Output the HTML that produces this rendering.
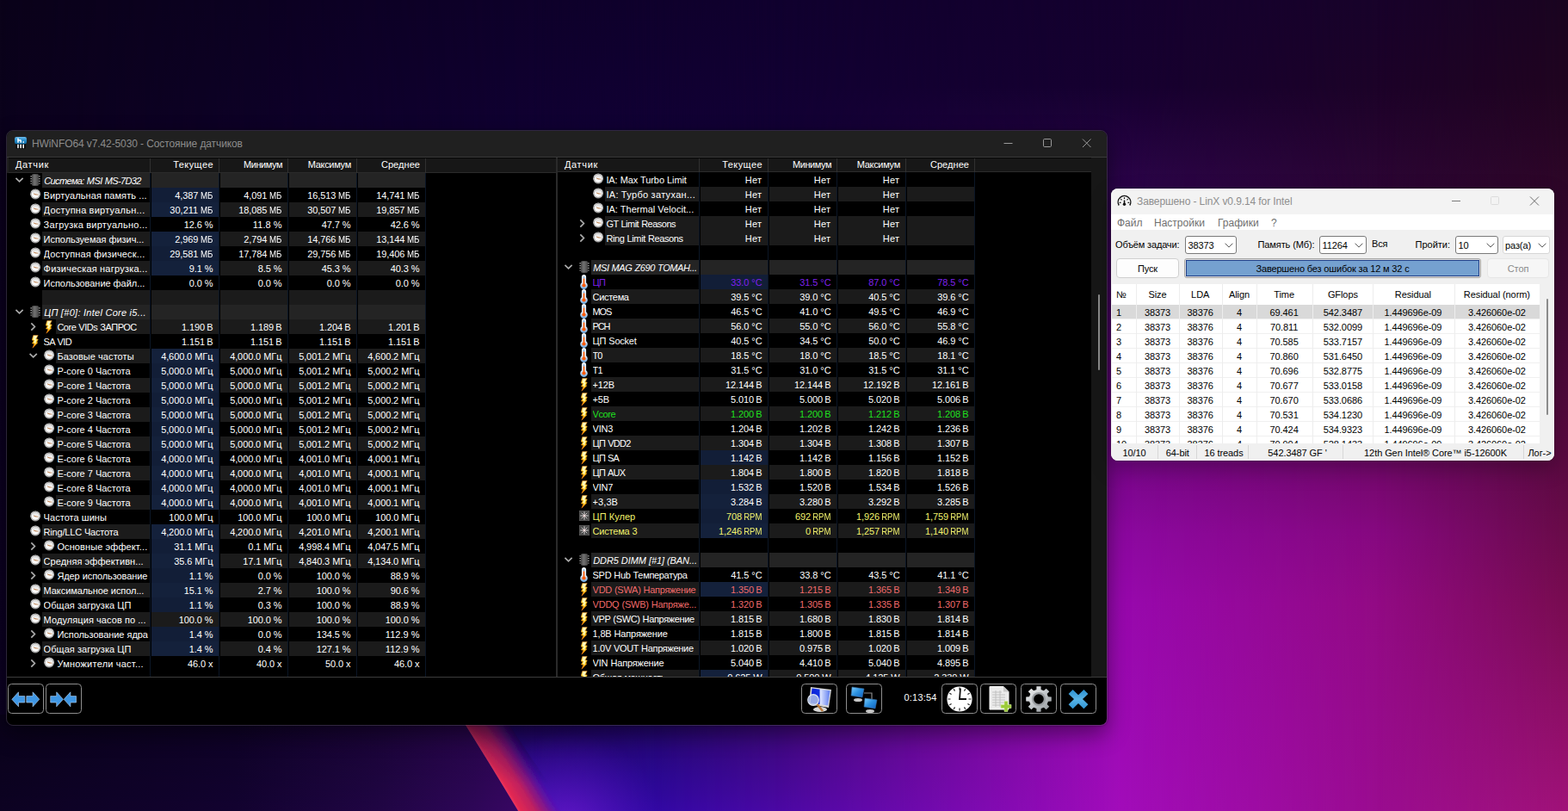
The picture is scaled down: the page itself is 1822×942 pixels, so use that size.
<!DOCTYPE html>
<html lang="ru"><head><meta charset="utf-8"><title>HWiNFO64 / LinX</title>
<style>
html,body{margin:0;padding:0;background:#0d0420;}
body{width:1822px;height:942px;overflow:hidden;position:relative;font-family:"Liberation Sans",sans-serif;font-size:11px;color:#fff;}
#page{position:absolute;left:0;top:0;width:1822px;height:942px;overflow:hidden;}
#page div,#page svg.a,.a{position:absolute;}
.win{left:0;top:0;width:1822px;height:942px;}
.t{line-height:19px;white-space:nowrap;overflow:hidden;color:#fff;}
.v{width:71.6px;padding-right:6.4px;line-height:19px;text-align:right;white-space:nowrap;color:#fff;}
.v span{display:inline-block;white-space:pre;}
.h{line-height:17px;white-space:nowrap;color:#fff;}
.lt{line-height:19px;white-space:nowrap;color:#000;text-align:center;letter-spacing:-0.08px;}
svg{display:block;}
</style></head><body><div id="page">

<svg class="a" style="left:0;top:0" width="1822" height="942" viewBox="0 0 1822 942">
<defs>
<linearGradient id="c0" x1="0" y1="0" x2="0" y2="1"><stop offset="0.0000" stop-color="#0a0219"/><stop offset="0.1603" stop-color="#0b021c"/><stop offset="0.8938" stop-color="#0c0222"/><stop offset="1.0000" stop-color="#0c0222"/></linearGradient>
<linearGradient id="c1" x1="0" y1="0" x2="0" y2="1"><stop offset="0.0000" stop-color="#0e002a"/><stop offset="0.1603" stop-color="#100032"/><stop offset="0.8938" stop-color="#1c0458"/><stop offset="0.9554" stop-color="#2c0a90"/><stop offset="1.0000" stop-color="#3c10b6"/></linearGradient>
<linearGradient id="h1" gradientUnits="userSpaceOnUse" x1="0" y1="0" x2="620" y2="0"><stop offset="0" stop-color="#fff" stop-opacity="0"/><stop offset="1" stop-color="#fff" stop-opacity="1"/></linearGradient>
<mask id="bm1" maskUnits="userSpaceOnUse" x="0" y="0" width="1822" height="942"><rect x="0" y="0" width="1822" height="942" fill="url(#h1)"/></mask>
<linearGradient id="c2" x1="0" y1="0" x2="0" y2="1"><stop offset="0.0000" stop-color="#0f002c"/><stop offset="0.1603" stop-color="#110034"/><stop offset="0.8938" stop-color="#22066a"/><stop offset="0.9554" stop-color="#2a0890"/><stop offset="1.0000" stop-color="#3208a4"/></linearGradient>
<linearGradient id="h2" gradientUnits="userSpaceOnUse" x1="620" y1="0" x2="760" y2="0"><stop offset="0" stop-color="#fff" stop-opacity="0"/><stop offset="1" stop-color="#fff" stop-opacity="1"/></linearGradient>
<mask id="bm2" maskUnits="userSpaceOnUse" x="0" y="0" width="1822" height="942"><rect x="620" y="0" width="1202" height="942" fill="url(#h2)"/></mask>
<linearGradient id="c3" x1="0" y1="0" x2="0" y2="1"><stop offset="0.0000" stop-color="#10002e"/><stop offset="0.1603" stop-color="#120034"/><stop offset="0.8938" stop-color="#3a0878"/><stop offset="1.0000" stop-color="#4a08a4"/></linearGradient>
<linearGradient id="h3" gradientUnits="userSpaceOnUse" x1="760" y1="0" x2="900" y2="0"><stop offset="0" stop-color="#fff" stop-opacity="0"/><stop offset="1" stop-color="#fff" stop-opacity="1"/></linearGradient>
<mask id="bm3" maskUnits="userSpaceOnUse" x="0" y="0" width="1822" height="942"><rect x="760" y="0" width="1062" height="942" fill="url(#h3)"/></mask>
<linearGradient id="c4" x1="0" y1="0" x2="0" y2="1"><stop offset="0.0000" stop-color="#14002e"/><stop offset="0.1062" stop-color="#160030"/><stop offset="0.2229" stop-color="#2a0448"/><stop offset="0.5732" stop-color="#78068a"/><stop offset="0.6582" stop-color="#8c08a0"/><stop offset="0.7431" stop-color="#9808ae"/><stop offset="1.0000" stop-color="#a20cba"/></linearGradient>
<linearGradient id="h4" gradientUnits="userSpaceOnUse" x1="900" y1="0" x2="1300" y2="0"><stop offset="0" stop-color="#fff" stop-opacity="0"/><stop offset="1" stop-color="#fff" stop-opacity="1"/></linearGradient>
<mask id="bm4" maskUnits="userSpaceOnUse" x="0" y="0" width="1822" height="942"><rect x="900" y="0" width="922" height="942" fill="url(#h4)"/></mask>
<linearGradient id="c5" x1="0" y1="0" x2="0" y2="1"><stop offset="0.0000" stop-color="#18022a"/><stop offset="0.1062" stop-color="#1c0228"/><stop offset="0.2335" stop-color="#2c0534"/><stop offset="0.5732" stop-color="#72086a"/><stop offset="0.6582" stop-color="#860880"/><stop offset="0.7431" stop-color="#920a84"/><stop offset="1.0000" stop-color="#9a0c90"/></linearGradient>
<linearGradient id="h5" gradientUnits="userSpaceOnUse" x1="1300" y1="0" x2="1600" y2="0"><stop offset="0" stop-color="#fff" stop-opacity="0"/><stop offset="1" stop-color="#fff" stop-opacity="1"/></linearGradient>
<mask id="bm5" maskUnits="userSpaceOnUse" x="0" y="0" width="1822" height="942"><rect x="1300" y="0" width="522" height="942" fill="url(#h5)"/></mask>
<linearGradient id="c6" x1="0" y1="0" x2="0" y2="1"><stop offset="0.0000" stop-color="#1a0420"/><stop offset="0.1062" stop-color="#200420"/><stop offset="0.2335" stop-color="#2e0628"/><stop offset="0.5732" stop-color="#5a0a40"/><stop offset="0.7431" stop-color="#780c50"/><stop offset="1.0000" stop-color="#a01278"/></linearGradient>
<linearGradient id="h6" gradientUnits="userSpaceOnUse" x1="1600" y1="0" x2="1822" y2="0"><stop offset="0" stop-color="#fff" stop-opacity="0"/><stop offset="1" stop-color="#fff" stop-opacity="1"/></linearGradient>
<mask id="bm6" maskUnits="userSpaceOnUse" x="0" y="0" width="1822" height="942"><rect x="1600" y="0" width="222" height="942" fill="url(#h6)"/></mask>
<linearGradient id="sl" gradientUnits="userSpaceOnUse" x1="0" y1="0" x2="610" y2="0"><stop offset="0" stop-color="#0c0222"/><stop offset="0.45" stop-color="#120230"/><stop offset="0.72" stop-color="#200544"/><stop offset="0.9" stop-color="#2e0658"/><stop offset="1" stop-color="#3a0666"/></linearGradient>
<linearGradient id="slv" x1="0" y1="0" x2="0" y2="1"><stop offset="0" stop-color="#000" stop-opacity="0.25"/><stop offset="1" stop-color="#000" stop-opacity="0"/></linearGradient>
<linearGradient id="sr" gradientUnits="userSpaceOnUse" x1="571" y1="893" x2="609" y2="870"><stop offset="0" stop-color="#f23c5e"/><stop offset="0.1" stop-color="#e22852"/><stop offset="0.42" stop-color="#c4205c" stop-opacity="0.95"/><stop offset="0.68" stop-color="#9a1878" stop-opacity="0.7"/><stop offset="1" stop-color="#6412a4" stop-opacity="0"/></linearGradient>
<linearGradient id="srv" gradientUnits="userSpaceOnUse" x1="0" y1="842" x2="0" y2="910"><stop offset="0" stop-color="#2a0648" stop-opacity="0.45"/><stop offset="1" stop-color="#2a0648" stop-opacity="0"/></linearGradient>
<radialGradient id="bgl" gradientUnits="userSpaceOnUse" cx="660" cy="960" r="110"><stop offset="0" stop-color="#6a18c8" stop-opacity="0.8"/><stop offset="1" stop-color="#4a10b0" stop-opacity="0"/></radialGradient>
<filter id="bl" x="-10%" y="-10%" width="120%" height="120%"><feGaussianBlur stdDeviation="0.7"/></filter>
</defs>
<rect width="1822" height="942" fill="url(#c0)"/>
<rect width="1822" height="942" fill="url(#c1)" mask="url(#bm1)"/>
<rect width="1822" height="942" fill="url(#c2)" mask="url(#bm2)"/>
<rect width="1822" height="942" fill="url(#c3)" mask="url(#bm3)"/>
<rect width="1822" height="942" fill="url(#c4)" mask="url(#bm4)"/>
<rect width="1822" height="942" fill="url(#c5)" mask="url(#bm5)"/>
<rect width="1822" height="942" fill="url(#c6)" mask="url(#bm6)"/>
<rect x="540" y="830" width="300" height="112" fill="url(#bgl)"/>
<path d="M0 830 H533.5 Q566 882 604.6 946 H0 Z" fill="url(#sl)"/>
<path d="M0 830 H533.5 Q566 882 604.6 946 H0 Z" fill="url(#slv)"/>
<g filter="url(#bl)"><path d="M533.5 830 Q566 882 604.6 946 L662 946 Q618 882 584 830 Z" fill="url(#sr)"/>
<path d="M533.5 830 Q566 882 604.6 946 L662 946 Q618 882 584 830 Z" fill="url(#srv)"/></g>
</svg>
<svg class="a" style="left:0;top:0" width="0" height="0"><defs><linearGradient id="gBez" x1="0" y1="0" x2="0" y2="1"><stop offset="0" stop-color="#d4d4d4"/><stop offset="0.5" stop-color="#e6e6e6"/><stop offset="1" stop-color="#c8c8c8"/></linearGradient><linearGradient id="gFace" x1="0" y1="0" x2="0" y2="1"><stop offset="0" stop-color="#d6d6d6"/><stop offset="0.45" stop-color="#f6f6f6"/><stop offset="1" stop-color="#ffffff"/></linearGradient><linearGradient id="gChip" x1="0" y1="0" x2="1" y2="0"><stop offset="0" stop-color="#4c4c4c"/><stop offset="0.4" stop-color="#727272"/><stop offset="1" stop-color="#484848"/></linearGradient><linearGradient id="gBolt" x1="0" y1="0" x2="0" y2="1"><stop offset="0" stop-color="#fff4b0"/><stop offset="0.45" stop-color="#ffe21a"/><stop offset="0.75" stop-color="#ffb000"/><stop offset="1" stop-color="#ff6a00"/></linearGradient><linearGradient id="gTh" x1="0" y1="0" x2="0" y2="1"><stop offset="0" stop-color="#f4f8fc"/><stop offset="0.6" stop-color="#d4e4f4"/><stop offset="1" stop-color="#6aa4dc"/></linearGradient></defs></svg>
<div class="a" style="left:7px;top:151px;width:1280px;height:692px;border-radius:8px;box-shadow:0 10px 26px rgba(0,0,0,0.42),0 0 2px rgba(0,0,0,0.5)"></div>
<div class="win" style="clip-path:inset(152px 536px 100px 8px round 7px)">
<div style="left:7px;top:151px;width:1280px;height:692px;background:#000"></div>
<div style="left:7px;top:151px;width:1280px;height:32px;background:#202020"></div>
<div style="left:7px;top:182px;width:1280px;height:1px;background:#3a3a3a"></div>
<div style="left:7px;top:183px;width:3px;height:18px;background:#1f1f1f"></div>
<div style="left:10px;top:183px;width:1258px;height:1px;background:#050505"></div>
<svg class="a" style="left:17px;top:159px" width="14" height="14" viewBox="0 0 14 14"><defs><linearGradient id="hwi" x1="0" y1="0" x2="0" y2="1"><stop offset="0" stop-color="#6cbcec"/><stop offset="0.45" stop-color="#2b8fcc"/><stop offset="1" stop-color="#0c6aa4"/></linearGradient></defs><rect x="1.5" y="7" width="11" height="7" rx="1.6" fill="#050505"/><rect x="0" y="0" width="14" height="8.300" rx="2.200" fill="url(#hwi)"/><path d="M4 1.500V6.800M7.200 6.800V4.600C7.200 3.600 5.800 3.400 4.700 4.200" stroke="#fff" stroke-width="1.500" fill="none"/><rect x="9.500" y="5.300" width="1.500" height="1.500" fill="#fff"/><path d="M4 9.300V12.600M7.100 9.300V12.600M10.200 9.300V12.600" stroke="#fff" stroke-width="1.600" stroke-linecap="round"/></svg>
<div class="a" style="left:37px;top:159px;height:17px;line-height:17px;font-size:12px;color:#8c8c8c;white-space:nowrap;letter-spacing:-0.1px">HWiNFO64 v7.42-5030 - Состояние датчиков</div>
<svg class="a" style="left:1166px;top:161px" width="102" height="11" viewBox="0 0 102 11"><path d="M0.5 5.5H10.5" stroke="#9a9a9a" stroke-width="1"/><rect x="46.5" y="0.5" width="9" height="9" rx="1.2" fill="none" stroke="#9a9a9a" stroke-width="1"/><path d="M92 0.5L101.5 10M101.5 0.5L92 10" stroke="#9a9a9a" stroke-width="1"/></svg>
<div style="left:10px;top:184px;width:636px;height:16px;background:#171717"></div>
<div style="left:10px;top:200px;width:636px;height:1px;background:#2b2b2b"></div>
<div class="h" style="left:18px;top:183px;width:150px;height:18px;text-align:left;letter-spacing:0.649px;">Датчик</div>
<div class="h" style="left:156px;top:183px;width:92px;height:18px;text-align:right;letter-spacing:0.414px;">Текущее</div>
<div class="h" style="left:236px;top:183px;width:92px;height:18px;text-align:right;letter-spacing:-0.459px;">Минимум</div>
<div class="h" style="left:316px;top:183px;width:92px;height:18px;text-align:right;letter-spacing:-0.287px;">Максимум</div>
<div class="h" style="left:396px;top:183px;width:92px;height:18px;text-align:right;letter-spacing:0.055px;">Среднее</div>
<div style="left:174px;top:184px;width:1px;height:17px;background:#303030"></div>
<div style="left:254px;top:184px;width:1px;height:17px;background:#303030"></div>
<div style="left:334px;top:184px;width:1px;height:17px;background:#303030"></div>
<div style="left:414px;top:184px;width:1px;height:17px;background:#303030"></div>
<div style="left:494px;top:184px;width:1px;height:17px;background:#303030"></div>
<div style="left:648px;top:184px;width:620px;height:15px;background:#171717"></div>
<div style="left:648px;top:199px;width:620px;height:1px;background:#2b2b2b"></div>
<div class="h" style="left:656px;top:182.5px;width:150px;height:17px;text-align:left;letter-spacing:0.649px;">Датчик</div>
<div class="h" style="left:794px;top:182.5px;width:92px;height:17px;text-align:right;letter-spacing:0.414px;">Текущее</div>
<div class="h" style="left:874px;top:182.5px;width:92px;height:17px;text-align:right;letter-spacing:-0.459px;">Минимум</div>
<div class="h" style="left:954px;top:182.5px;width:92px;height:17px;text-align:right;letter-spacing:-0.287px;">Максимум</div>
<div class="h" style="left:1034px;top:182.5px;width:92px;height:17px;text-align:right;letter-spacing:0.055px;">Среднее</div>
<div style="left:812px;top:184px;width:1px;height:16px;background:#303030"></div>
<div style="left:892px;top:184px;width:1px;height:16px;background:#303030"></div>
<div style="left:972px;top:184px;width:1px;height:16px;background:#303030"></div>
<div style="left:1052px;top:184px;width:1px;height:16px;background:#303030"></div>
<div style="left:1132px;top:184px;width:1px;height:16px;background:#303030"></div>
<div style="left:646px;top:183px;width:2px;height:604px;background:#2a2a2a"></div>
<div style="left:1268px;top:183px;width:18px;height:604px;background:#171717"></div>
<div style="left:1276px;top:342px;width:2px;height:88px;background:#8a8a8a;border-radius:1px"></div>
<div class="win" style="clip-path:inset(201px 0 156px 0)">
<div style="left:49px;top:201px;width:125px;height:17px;background:#242424"></div>
<svg class="a" style="left:17px;top:204px" width="11" height="11" viewBox="0 0 11 11"><path transform="translate(0.55 0.50)" d="M0.900 2.300 L5 6.400 L9.100 2.300" fill="none" stroke="#ababab" stroke-width="1.7"/></svg>
<div class="a ic" style="left:35px;top:201px;width:13px;height:15px"><div style="left:0.20px;top:0.80px;width:12px;height:14px"><svg width="12" height="14" viewBox="0 0 12 14"><rect x="2.1" y="0.2" width="7.800" height="13.600" rx="1.4" fill="url(#gChip)"/><path d="M0.500 2.900h1.300M0.500 5.600h1.300M0.500 8.300h1.300M0.500 11h1.300M10.200 2.900h1.300M10.200 5.600h1.300M10.200 8.300h1.300M10.200 11h1.300" stroke="#c4c4c4" stroke-width="1.2"/></svg></div></div>
<div class="t" style="left:51.2px;top:201px;width:124.8px;height:17px;font-style:italic;letter-spacing:-0.604px;word-spacing:0.604px;">Система: MSI MS-7D32</div>
<div class="v" style="left:176px;top:201px;height:17px;background:#242424;"></div>
<div class="v" style="left:256px;top:201px;height:17px;background:#242424;"></div>
<div class="v" style="left:336px;top:201px;height:17px;background:#242424;"></div>
<div class="v" style="left:416px;top:201px;height:17px;background:#242424;"></div>
<div class="a ic" style="left:34px;top:219px;width:13.2px;height:14.2px"><div style="left:0.80px;top:0.30px;width:12.2px;height:13.2px"><svg width="12.2" height="13.2" viewBox="0 0 13 14"><ellipse cx="6.5" cy="7.600" rx="6" ry="5.900" fill="#8a8a8a" fill-opacity="0.75"/><circle cx="6.5" cy="6.5" r="6.1" fill="url(#gBez)"/><circle cx="6.5" cy="6.5" r="5.1" fill="none" stroke="#8a8a8a" stroke-width="0.75"/><circle cx="6.5" cy="6.700" r="4.700" fill="url(#gFace)"/><path d="M6.500 7.200 L4.600 6.400 M6.500 7.200 L9.500 7.600" stroke="#b0672c" stroke-width="0.8" fill="none" stroke-linecap="round"/></svg></div></div>
<div class="t" style="left:50.6px;top:218px;width:125.4px;height:17px;letter-spacing:0.108px;word-spacing:-0.108px;">Виртуальная память ...</div>
<div class="v" style="left:176px;top:218px;height:17px;background:#121e37;"><span style="letter-spacing:-0.105px">4,387</span> <span style="transform:scaleX(0.885);transform-origin:100% 50%;margin-left:-2.14px">МБ</span></div>
<div class="v" style="left:256px;top:218px;height:17px;"><span style="letter-spacing:-0.105px">4,091</span> <span style="transform:scaleX(0.885);transform-origin:100% 50%;margin-left:-2.14px">МБ</span></div>
<div class="v" style="left:336px;top:218px;height:17px;"><span style="letter-spacing:-0.108px">16,513</span> <span style="transform:scaleX(0.885);transform-origin:100% 50%;margin-left:-2.14px">МБ</span></div>
<div class="v" style="left:416px;top:218px;height:17px;"><span style="letter-spacing:-0.108px">14,741</span> <span style="transform:scaleX(0.885);transform-origin:100% 50%;margin-left:-2.14px">МБ</span></div>
<div style="left:49px;top:235px;width:125px;height:17px;background:#1b1b1b"></div>
<div class="a ic" style="left:34px;top:236px;width:13.2px;height:14.2px"><div style="left:0.80px;top:0.30px;width:12.2px;height:13.2px"><svg width="12.2" height="13.2" viewBox="0 0 13 14"><ellipse cx="6.5" cy="7.600" rx="6" ry="5.900" fill="#8a8a8a" fill-opacity="0.75"/><circle cx="6.5" cy="6.5" r="6.1" fill="url(#gBez)"/><circle cx="6.5" cy="6.5" r="5.1" fill="none" stroke="#8a8a8a" stroke-width="0.75"/><circle cx="6.5" cy="6.700" r="4.700" fill="url(#gFace)"/><path d="M6.500 7.200 L4.600 6.400 M6.500 7.200 L9.500 7.600" stroke="#b0672c" stroke-width="0.8" fill="none" stroke-linecap="round"/></svg></div></div>
<div class="t" style="left:50.6px;top:235px;width:125.4px;height:17px;letter-spacing:0.244px;word-spacing:-0.244px;">Доступна виртуальн...</div>
<div class="v" style="left:176px;top:235px;height:17px;background:#14213b;"><span style="letter-spacing:0.029px">30,211</span> <span style="transform:scaleX(0.885);transform-origin:100% 50%;margin-left:-2.14px">МБ</span></div>
<div class="v" style="left:256px;top:235px;height:17px;background:#1b1b1b;"><span style="letter-spacing:-0.108px">18,085</span> <span style="transform:scaleX(0.885);transform-origin:100% 50%;margin-left:-2.14px">МБ</span></div>
<div class="v" style="left:336px;top:235px;height:17px;background:#1b1b1b;"><span style="letter-spacing:-0.108px">30,507</span> <span style="transform:scaleX(0.885);transform-origin:100% 50%;margin-left:-2.14px">МБ</span></div>
<div class="v" style="left:416px;top:235px;height:17px;background:#1b1b1b;"><span style="letter-spacing:-0.108px">19,857</span> <span style="transform:scaleX(0.885);transform-origin:100% 50%;margin-left:-2.14px">МБ</span></div>
<div class="a ic" style="left:34px;top:253px;width:13.2px;height:14.2px"><div style="left:0.80px;top:0.30px;width:12.2px;height:13.2px"><svg width="12.2" height="13.2" viewBox="0 0 13 14"><ellipse cx="6.5" cy="7.600" rx="6" ry="5.900" fill="#8a8a8a" fill-opacity="0.75"/><circle cx="6.5" cy="6.5" r="6.1" fill="url(#gBez)"/><circle cx="6.5" cy="6.5" r="5.1" fill="none" stroke="#8a8a8a" stroke-width="0.75"/><circle cx="6.5" cy="6.700" r="4.700" fill="url(#gFace)"/><path d="M6.500 7.200 L4.600 6.400 M6.500 7.200 L9.500 7.600" stroke="#b0672c" stroke-width="0.8" fill="none" stroke-linecap="round"/></svg></div></div>
<div class="t" style="left:50.6px;top:252px;width:125.4px;height:17px;letter-spacing:0.261px;word-spacing:-0.261px;">Загрузка виртуально...</div>
<div class="v" style="left:176px;top:252px;height:17px;"><span style="letter-spacing:-0.102px">12.6</span> <span style="margin-left:-0.06px">%</span></div>
<div class="v" style="left:256px;top:252px;height:17px;"><span style="letter-spacing:0.102px">11.8</span> <span style="margin-left:-0.06px">%</span></div>
<div class="v" style="left:336px;top:252px;height:17px;"><span style="letter-spacing:-0.102px">47.7</span> <span style="margin-left:-0.06px">%</span></div>
<div class="v" style="left:416px;top:252px;height:17px;"><span style="letter-spacing:-0.102px">42.6</span> <span style="margin-left:-0.06px">%</span></div>
<div style="left:49px;top:269px;width:125px;height:17px;background:#1b1b1b"></div>
<div class="a ic" style="left:34px;top:270px;width:13.2px;height:14.2px"><div style="left:0.80px;top:0.30px;width:12.2px;height:13.2px"><svg width="12.2" height="13.2" viewBox="0 0 13 14"><ellipse cx="6.5" cy="7.600" rx="6" ry="5.900" fill="#8a8a8a" fill-opacity="0.75"/><circle cx="6.5" cy="6.5" r="6.1" fill="url(#gBez)"/><circle cx="6.5" cy="6.5" r="5.1" fill="none" stroke="#8a8a8a" stroke-width="0.75"/><circle cx="6.5" cy="6.700" r="4.700" fill="url(#gFace)"/><path d="M6.500 7.200 L4.600 6.400 M6.500 7.200 L9.500 7.600" stroke="#b0672c" stroke-width="0.8" fill="none" stroke-linecap="round"/></svg></div></div>
<div class="t" style="left:50.6px;top:269px;width:125.4px;height:17px;letter-spacing:-0.051px;word-spacing:0.051px;">Используемая физич...</div>
<div class="v" style="left:176px;top:269px;height:17px;background:#14213b;"><span style="letter-spacing:-0.105px">2,969</span> <span style="transform:scaleX(0.885);transform-origin:100% 50%;margin-left:-2.14px">МБ</span></div>
<div class="v" style="left:256px;top:269px;height:17px;background:#1b1b1b;"><span style="letter-spacing:-0.105px">2,794</span> <span style="transform:scaleX(0.885);transform-origin:100% 50%;margin-left:-2.14px">МБ</span></div>
<div class="v" style="left:336px;top:269px;height:17px;background:#1b1b1b;"><span style="letter-spacing:-0.108px">14,766</span> <span style="transform:scaleX(0.885);transform-origin:100% 50%;margin-left:-2.14px">МБ</span></div>
<div class="v" style="left:416px;top:269px;height:17px;background:#1b1b1b;"><span style="letter-spacing:-0.108px">13,144</span> <span style="transform:scaleX(0.885);transform-origin:100% 50%;margin-left:-2.14px">МБ</span></div>
<div class="a ic" style="left:34px;top:287px;width:13.2px;height:14.2px"><div style="left:0.80px;top:0.30px;width:12.2px;height:13.2px"><svg width="12.2" height="13.2" viewBox="0 0 13 14"><ellipse cx="6.5" cy="7.600" rx="6" ry="5.900" fill="#8a8a8a" fill-opacity="0.75"/><circle cx="6.5" cy="6.5" r="6.1" fill="url(#gBez)"/><circle cx="6.5" cy="6.5" r="5.1" fill="none" stroke="#8a8a8a" stroke-width="0.75"/><circle cx="6.5" cy="6.700" r="4.700" fill="url(#gFace)"/><path d="M6.500 7.200 L4.600 6.400 M6.500 7.200 L9.500 7.600" stroke="#b0672c" stroke-width="0.8" fill="none" stroke-linecap="round"/></svg></div></div>
<div class="t" style="left:50.6px;top:286px;width:125.4px;height:17px;letter-spacing:0.151px;word-spacing:-0.151px;">Доступная физическ...</div>
<div class="v" style="left:176px;top:286px;height:17px;background:#121e37;"><span style="letter-spacing:-0.108px">29,581</span> <span style="transform:scaleX(0.885);transform-origin:100% 50%;margin-left:-2.14px">МБ</span></div>
<div class="v" style="left:256px;top:286px;height:17px;"><span style="letter-spacing:-0.108px">17,784</span> <span style="transform:scaleX(0.885);transform-origin:100% 50%;margin-left:-2.14px">МБ</span></div>
<div class="v" style="left:336px;top:286px;height:17px;"><span style="letter-spacing:-0.108px">29,756</span> <span style="transform:scaleX(0.885);transform-origin:100% 50%;margin-left:-2.14px">МБ</span></div>
<div class="v" style="left:416px;top:286px;height:17px;"><span style="letter-spacing:-0.108px">19,406</span> <span style="transform:scaleX(0.885);transform-origin:100% 50%;margin-left:-2.14px">МБ</span></div>
<div style="left:49px;top:303px;width:125px;height:17px;background:#1b1b1b"></div>
<div class="a ic" style="left:34px;top:304px;width:13.2px;height:14.2px"><div style="left:0.80px;top:0.30px;width:12.2px;height:13.2px"><svg width="12.2" height="13.2" viewBox="0 0 13 14"><ellipse cx="6.5" cy="7.600" rx="6" ry="5.900" fill="#8a8a8a" fill-opacity="0.75"/><circle cx="6.5" cy="6.5" r="6.1" fill="url(#gBez)"/><circle cx="6.5" cy="6.5" r="5.1" fill="none" stroke="#8a8a8a" stroke-width="0.75"/><circle cx="6.5" cy="6.700" r="4.700" fill="url(#gFace)"/><path d="M6.500 7.200 L4.600 6.400 M6.500 7.200 L9.500 7.600" stroke="#b0672c" stroke-width="0.8" fill="none" stroke-linecap="round"/></svg></div></div>
<div class="t" style="left:50.6px;top:303px;width:125.4px;height:17px;letter-spacing:0.224px;word-spacing:-0.224px;">Физическая нагрузка...</div>
<div class="v" style="left:176px;top:303px;height:17px;background:#14213b;"><span style="letter-spacing:-0.097px">9.1</span> <span style="margin-left:-0.06px">%</span></div>
<div class="v" style="left:256px;top:303px;height:17px;background:#1b1b1b;"><span style="letter-spacing:-0.097px">8.5</span> <span style="margin-left:-0.06px">%</span></div>
<div class="v" style="left:336px;top:303px;height:17px;background:#1b1b1b;"><span style="letter-spacing:-0.102px">45.3</span> <span style="margin-left:-0.06px">%</span></div>
<div class="v" style="left:416px;top:303px;height:17px;background:#1b1b1b;"><span style="letter-spacing:-0.102px">40.3</span> <span style="margin-left:-0.06px">%</span></div>
<div class="a ic" style="left:34px;top:321px;width:13.2px;height:14.2px"><div style="left:0.80px;top:0.30px;width:12.2px;height:13.2px"><svg width="12.2" height="13.2" viewBox="0 0 13 14"><ellipse cx="6.5" cy="7.600" rx="6" ry="5.900" fill="#8a8a8a" fill-opacity="0.75"/><circle cx="6.5" cy="6.5" r="6.1" fill="url(#gBez)"/><circle cx="6.5" cy="6.5" r="5.1" fill="none" stroke="#8a8a8a" stroke-width="0.75"/><circle cx="6.5" cy="6.700" r="4.700" fill="url(#gFace)"/><path d="M6.500 7.200 L4.600 6.400 M6.500 7.200 L9.500 7.600" stroke="#b0672c" stroke-width="0.8" fill="none" stroke-linecap="round"/></svg></div></div>
<div class="t" style="left:50.6px;top:320px;width:125.4px;height:17px;letter-spacing:-0.050px;word-spacing:0.050px;">Использование файл...</div>
<div class="v" style="left:176px;top:320px;height:17px;"><span style="letter-spacing:-0.097px">0.0</span> <span style="margin-left:-0.06px">%</span></div>
<div class="v" style="left:256px;top:320px;height:17px;"><span style="letter-spacing:-0.097px">0.0</span> <span style="margin-left:-0.06px">%</span></div>
<div class="v" style="left:336px;top:320px;height:17px;"><span style="letter-spacing:-0.097px">0.0</span> <span style="margin-left:-0.06px">%</span></div>
<div class="v" style="left:416px;top:320px;height:17px;"><span style="letter-spacing:-0.097px">0.0</span> <span style="margin-left:-0.06px">%</span></div>
<div style="left:49px;top:337px;width:125px;height:17px;background:#1b1b1b"></div>
<div class="v" style="left:176px;top:337px;height:17px;background:#1b1b1b;"></div>
<div class="v" style="left:256px;top:337px;height:17px;background:#1b1b1b;"></div>
<div class="v" style="left:336px;top:337px;height:17px;background:#1b1b1b;"></div>
<div class="v" style="left:416px;top:337px;height:17px;background:#1b1b1b;"></div>
<div style="left:49px;top:354px;width:125px;height:17px;background:#242424"></div>
<svg class="a" style="left:17px;top:357px" width="11" height="11" viewBox="0 0 11 11"><path transform="translate(0.55 0.50)" d="M0.900 2.300 L5 6.400 L9.100 2.300" fill="none" stroke="#ababab" stroke-width="1.7"/></svg>
<div class="a ic" style="left:35px;top:354px;width:13px;height:15px"><div style="left:0.20px;top:0.80px;width:12px;height:14px"><svg width="12" height="14" viewBox="0 0 12 14"><rect x="2.1" y="0.2" width="7.800" height="13.600" rx="1.4" fill="url(#gChip)"/><path d="M0.500 2.900h1.300M0.500 5.600h1.300M0.500 8.300h1.300M0.500 11h1.300M10.200 2.900h1.300M10.200 5.600h1.300M10.200 8.300h1.300M10.200 11h1.300" stroke="#c4c4c4" stroke-width="1.2"/></svg></div></div>
<div class="t" style="left:51.2px;top:354px;width:124.8px;height:17px;font-style:italic;letter-spacing:0.322px;word-spacing:-0.322px;">ЦП [#0]: Intel Core i5...</div>
<div class="v" style="left:176px;top:354px;height:17px;background:#242424;"></div>
<div class="v" style="left:256px;top:354px;height:17px;background:#242424;"></div>
<div class="v" style="left:336px;top:354px;height:17px;background:#242424;"></div>
<div class="v" style="left:416px;top:354px;height:17px;background:#242424;"></div>
<div style="left:65px;top:371px;width:109px;height:17px;background:#1b1b1b"></div>
<svg class="a" style="left:33px;top:374px" width="11" height="11" viewBox="0 0 11 11"><path transform="translate(0.70 0.50)" d="M2.600 0.900 L6.700 5 L2.600 9.100" fill="none" stroke="#ababab" stroke-width="1.7"/></svg>
<div class="a ic" style="left:52px;top:371px;width:9px;height:17px"><div style="left:0.90px;top:0.70px;width:8px;height:16px"><svg width="8" height="16" viewBox="0 0 8 16"><path d="M1.800 0.400 L7.200 0.400 L5.100 4.700 L7.300 5.100 L5.700 8.500 L6.900 8.900 L0.900 15.200 L2.800 10.300 L0.400 9.900 L2.300 6.500 L0.100 6.100 Z" fill="url(#gBolt)" stroke="#f28a1c" stroke-width="0.5" stroke-linejoin="round"/><path d="M3.200 1.400 L5.600 1.400 L3.900 5.200 L5.700 5.600 L4.300 8.700 L5.100 9.100 L3.200 11.200 L3.900 9.400 L2 9 L3.600 6 L1.600 5.600 Z" fill="#fffbe0" fill-opacity="0.85"/></svg></div></div>
<div class="t" style="left:66.4px;top:371px;width:109.6px;height:17px;letter-spacing:-0.481px;word-spacing:0.481px;">Core VIDs ЗАПРОС</div>
<div class="v" style="left:176px;top:371px;height:17px;background:#1b1b1b;"><span style="letter-spacing:-0.105px">1.190</span> <span style="margin-left:-0.86px">В</span></div>
<div class="v" style="left:256px;top:371px;height:17px;background:#1b1b1b;"><span style="letter-spacing:-0.105px">1.189</span> <span style="margin-left:-0.86px">В</span></div>
<div class="v" style="left:336px;top:371px;height:17px;background:#1b1b1b;"><span style="letter-spacing:-0.105px">1.204</span> <span style="margin-left:-0.86px">В</span></div>
<div class="v" style="left:416px;top:371px;height:17px;background:#1b1b1b;"><span style="letter-spacing:-0.105px">1.201</span> <span style="margin-left:-0.86px">В</span></div>
<div class="a ic" style="left:36px;top:388px;width:9px;height:17px"><div style="left:0.80px;top:0.70px;width:8px;height:16px"><svg width="8" height="16" viewBox="0 0 8 16"><path d="M1.800 0.400 L7.200 0.400 L5.100 4.700 L7.300 5.100 L5.700 8.500 L6.900 8.900 L0.900 15.200 L2.800 10.300 L0.400 9.900 L2.300 6.500 L0.100 6.100 Z" fill="url(#gBolt)" stroke="#f28a1c" stroke-width="0.5" stroke-linejoin="round"/><path d="M3.200 1.400 L5.600 1.400 L3.900 5.200 L5.700 5.600 L4.300 8.700 L5.100 9.100 L3.200 11.200 L3.900 9.400 L2 9 L3.600 6 L1.600 5.600 Z" fill="#fffbe0" fill-opacity="0.85"/></svg></div></div>
<div class="t" style="left:50.6px;top:388px;width:125.4px;height:17px;letter-spacing:-0.565px;word-spacing:0.565px;">SA VID</div>
<div class="v" style="left:176px;top:388px;height:17px;"><span style="letter-spacing:-0.105px">1.151</span> <span style="margin-left:-0.86px">В</span></div>
<div class="v" style="left:256px;top:388px;height:17px;"><span style="letter-spacing:-0.105px">1.151</span> <span style="margin-left:-0.86px">В</span></div>
<div class="v" style="left:336px;top:388px;height:17px;"><span style="letter-spacing:-0.105px">1.151</span> <span style="margin-left:-0.86px">В</span></div>
<div class="v" style="left:416px;top:388px;height:17px;"><span style="letter-spacing:-0.105px">1.151</span> <span style="margin-left:-0.86px">В</span></div>
<div style="left:65px;top:405px;width:109px;height:17px;background:#1b1b1b"></div>
<svg class="a" style="left:33px;top:408px" width="11" height="11" viewBox="0 0 11 11"><path transform="translate(0.70 0.50)" d="M0.900 2.300 L5 6.400 L9.100 2.300" fill="none" stroke="#ababab" stroke-width="1.7"/></svg>
<div class="a ic" style="left:50px;top:406px;width:13.2px;height:14.2px"><div style="left:0.90px;top:0.30px;width:12.2px;height:13.2px"><svg width="12.2" height="13.2" viewBox="0 0 13 14"><ellipse cx="6.5" cy="7.600" rx="6" ry="5.900" fill="#8a8a8a" fill-opacity="0.75"/><circle cx="6.5" cy="6.5" r="6.1" fill="url(#gBez)"/><circle cx="6.5" cy="6.5" r="5.1" fill="none" stroke="#8a8a8a" stroke-width="0.75"/><circle cx="6.5" cy="6.700" r="4.700" fill="url(#gFace)"/><path d="M6.500 7.200 L4.600 6.400 M6.500 7.200 L9.500 7.600" stroke="#b0672c" stroke-width="0.8" fill="none" stroke-linecap="round"/></svg></div></div>
<div class="t" style="left:66.4px;top:405px;width:109.6px;height:17px;letter-spacing:0.072px;word-spacing:-0.072px;">Базовые частоты</div>
<div class="v" style="left:176px;top:405px;height:17px;background:#14213b;"><span style="letter-spacing:-0.100px">4,600.0</span> <span style="margin-left:-0.06px">МГц</span></div>
<div class="v" style="left:256px;top:405px;height:17px;background:#1b1b1b;"><span style="letter-spacing:-0.100px">4,000.0</span> <span style="margin-left:-0.06px">МГц</span></div>
<div class="v" style="left:336px;top:405px;height:17px;background:#1b1b1b;"><span style="letter-spacing:-0.100px">5,001.2</span> <span style="margin-left:-0.06px">МГц</span></div>
<div class="v" style="left:416px;top:405px;height:17px;background:#1b1b1b;"><span style="letter-spacing:-0.100px">4,600.2</span> <span style="margin-left:-0.06px">МГц</span></div>
<div class="a ic" style="left:50px;top:423px;width:13.2px;height:14.2px"><div style="left:0.90px;top:0.30px;width:12.2px;height:13.2px"><svg width="12.2" height="13.2" viewBox="0 0 13 14"><ellipse cx="6.5" cy="7.600" rx="6" ry="5.900" fill="#8a8a8a" fill-opacity="0.75"/><circle cx="6.5" cy="6.5" r="6.1" fill="url(#gBez)"/><circle cx="6.5" cy="6.5" r="5.1" fill="none" stroke="#8a8a8a" stroke-width="0.75"/><circle cx="6.5" cy="6.700" r="4.700" fill="url(#gFace)"/><path d="M6.500 7.200 L4.600 6.400 M6.500 7.200 L9.500 7.600" stroke="#b0672c" stroke-width="0.8" fill="none" stroke-linecap="round"/></svg></div></div>
<div class="t" style="left:66.4px;top:422px;width:109.6px;height:17px;letter-spacing:-0.016px;word-spacing:0.016px;">P-core 0 Частота</div>
<div class="v" style="left:176px;top:422px;height:17px;background:#121e37;"><span style="letter-spacing:-0.100px">5,000.0</span> <span style="margin-left:-0.06px">МГц</span></div>
<div class="v" style="left:256px;top:422px;height:17px;"><span style="letter-spacing:-0.100px">5,000.0</span> <span style="margin-left:-0.06px">МГц</span></div>
<div class="v" style="left:336px;top:422px;height:17px;"><span style="letter-spacing:-0.100px">5,001.2</span> <span style="margin-left:-0.06px">МГц</span></div>
<div class="v" style="left:416px;top:422px;height:17px;"><span style="letter-spacing:-0.100px">5,000.2</span> <span style="margin-left:-0.06px">МГц</span></div>
<div style="left:65px;top:439px;width:109px;height:17px;background:#1b1b1b"></div>
<div class="a ic" style="left:50px;top:440px;width:13.2px;height:14.2px"><div style="left:0.90px;top:0.30px;width:12.2px;height:13.2px"><svg width="12.2" height="13.2" viewBox="0 0 13 14"><ellipse cx="6.5" cy="7.600" rx="6" ry="5.900" fill="#8a8a8a" fill-opacity="0.75"/><circle cx="6.5" cy="6.5" r="6.1" fill="url(#gBez)"/><circle cx="6.5" cy="6.5" r="5.1" fill="none" stroke="#8a8a8a" stroke-width="0.75"/><circle cx="6.5" cy="6.700" r="4.700" fill="url(#gFace)"/><path d="M6.500 7.200 L4.600 6.400 M6.500 7.200 L9.500 7.600" stroke="#b0672c" stroke-width="0.8" fill="none" stroke-linecap="round"/></svg></div></div>
<div class="t" style="left:66.4px;top:439px;width:109.6px;height:17px;letter-spacing:-0.016px;word-spacing:0.016px;">P-core 1 Частота</div>
<div class="v" style="left:176px;top:439px;height:17px;background:#14213b;"><span style="letter-spacing:-0.100px">5,000.0</span> <span style="margin-left:-0.06px">МГц</span></div>
<div class="v" style="left:256px;top:439px;height:17px;background:#1b1b1b;"><span style="letter-spacing:-0.100px">5,000.0</span> <span style="margin-left:-0.06px">МГц</span></div>
<div class="v" style="left:336px;top:439px;height:17px;background:#1b1b1b;"><span style="letter-spacing:-0.100px">5,001.2</span> <span style="margin-left:-0.06px">МГц</span></div>
<div class="v" style="left:416px;top:439px;height:17px;background:#1b1b1b;"><span style="letter-spacing:-0.100px">5,000.2</span> <span style="margin-left:-0.06px">МГц</span></div>
<div class="a ic" style="left:50px;top:457px;width:13.2px;height:14.2px"><div style="left:0.90px;top:0.30px;width:12.2px;height:13.2px"><svg width="12.2" height="13.2" viewBox="0 0 13 14"><ellipse cx="6.5" cy="7.600" rx="6" ry="5.900" fill="#8a8a8a" fill-opacity="0.75"/><circle cx="6.5" cy="6.5" r="6.1" fill="url(#gBez)"/><circle cx="6.5" cy="6.5" r="5.1" fill="none" stroke="#8a8a8a" stroke-width="0.75"/><circle cx="6.5" cy="6.700" r="4.700" fill="url(#gFace)"/><path d="M6.500 7.200 L4.600 6.400 M6.500 7.200 L9.500 7.600" stroke="#b0672c" stroke-width="0.8" fill="none" stroke-linecap="round"/></svg></div></div>
<div class="t" style="left:66.4px;top:456px;width:109.6px;height:17px;letter-spacing:-0.016px;word-spacing:0.016px;">P-core 2 Частота</div>
<div class="v" style="left:176px;top:456px;height:17px;background:#121e37;"><span style="letter-spacing:-0.100px">5,000.0</span> <span style="margin-left:-0.06px">МГц</span></div>
<div class="v" style="left:256px;top:456px;height:17px;"><span style="letter-spacing:-0.100px">5,000.0</span> <span style="margin-left:-0.06px">МГц</span></div>
<div class="v" style="left:336px;top:456px;height:17px;"><span style="letter-spacing:-0.100px">5,001.2</span> <span style="margin-left:-0.06px">МГц</span></div>
<div class="v" style="left:416px;top:456px;height:17px;"><span style="letter-spacing:-0.100px">5,000.2</span> <span style="margin-left:-0.06px">МГц</span></div>
<div style="left:65px;top:473px;width:109px;height:17px;background:#1b1b1b"></div>
<div class="a ic" style="left:50px;top:474px;width:13.2px;height:14.2px"><div style="left:0.90px;top:0.30px;width:12.2px;height:13.2px"><svg width="12.2" height="13.2" viewBox="0 0 13 14"><ellipse cx="6.5" cy="7.600" rx="6" ry="5.900" fill="#8a8a8a" fill-opacity="0.75"/><circle cx="6.5" cy="6.5" r="6.1" fill="url(#gBez)"/><circle cx="6.5" cy="6.5" r="5.1" fill="none" stroke="#8a8a8a" stroke-width="0.75"/><circle cx="6.5" cy="6.700" r="4.700" fill="url(#gFace)"/><path d="M6.500 7.200 L4.600 6.400 M6.500 7.200 L9.500 7.600" stroke="#b0672c" stroke-width="0.8" fill="none" stroke-linecap="round"/></svg></div></div>
<div class="t" style="left:66.4px;top:473px;width:109.6px;height:17px;letter-spacing:-0.016px;word-spacing:0.016px;">P-core 3 Частота</div>
<div class="v" style="left:176px;top:473px;height:17px;background:#14213b;"><span style="letter-spacing:-0.100px">5,000.0</span> <span style="margin-left:-0.06px">МГц</span></div>
<div class="v" style="left:256px;top:473px;height:17px;background:#1b1b1b;"><span style="letter-spacing:-0.100px">5,000.0</span> <span style="margin-left:-0.06px">МГц</span></div>
<div class="v" style="left:336px;top:473px;height:17px;background:#1b1b1b;"><span style="letter-spacing:-0.100px">5,001.2</span> <span style="margin-left:-0.06px">МГц</span></div>
<div class="v" style="left:416px;top:473px;height:17px;background:#1b1b1b;"><span style="letter-spacing:-0.100px">5,000.2</span> <span style="margin-left:-0.06px">МГц</span></div>
<div class="a ic" style="left:50px;top:491px;width:13.2px;height:14.2px"><div style="left:0.90px;top:0.30px;width:12.2px;height:13.2px"><svg width="12.2" height="13.2" viewBox="0 0 13 14"><ellipse cx="6.5" cy="7.600" rx="6" ry="5.900" fill="#8a8a8a" fill-opacity="0.75"/><circle cx="6.5" cy="6.5" r="6.1" fill="url(#gBez)"/><circle cx="6.5" cy="6.5" r="5.1" fill="none" stroke="#8a8a8a" stroke-width="0.75"/><circle cx="6.5" cy="6.700" r="4.700" fill="url(#gFace)"/><path d="M6.500 7.200 L4.600 6.400 M6.500 7.200 L9.500 7.600" stroke="#b0672c" stroke-width="0.8" fill="none" stroke-linecap="round"/></svg></div></div>
<div class="t" style="left:66.4px;top:490px;width:109.6px;height:17px;letter-spacing:-0.016px;word-spacing:0.016px;">P-core 4 Частота</div>
<div class="v" style="left:176px;top:490px;height:17px;background:#121e37;"><span style="letter-spacing:-0.100px">5,000.0</span> <span style="margin-left:-0.06px">МГц</span></div>
<div class="v" style="left:256px;top:490px;height:17px;"><span style="letter-spacing:-0.100px">5,000.0</span> <span style="margin-left:-0.06px">МГц</span></div>
<div class="v" style="left:336px;top:490px;height:17px;"><span style="letter-spacing:-0.100px">5,001.2</span> <span style="margin-left:-0.06px">МГц</span></div>
<div class="v" style="left:416px;top:490px;height:17px;"><span style="letter-spacing:-0.100px">5,000.2</span> <span style="margin-left:-0.06px">МГц</span></div>
<div style="left:65px;top:507px;width:109px;height:17px;background:#1b1b1b"></div>
<div class="a ic" style="left:50px;top:508px;width:13.2px;height:14.2px"><div style="left:0.90px;top:0.30px;width:12.2px;height:13.2px"><svg width="12.2" height="13.2" viewBox="0 0 13 14"><ellipse cx="6.5" cy="7.600" rx="6" ry="5.900" fill="#8a8a8a" fill-opacity="0.75"/><circle cx="6.5" cy="6.5" r="6.1" fill="url(#gBez)"/><circle cx="6.5" cy="6.5" r="5.1" fill="none" stroke="#8a8a8a" stroke-width="0.75"/><circle cx="6.5" cy="6.700" r="4.700" fill="url(#gFace)"/><path d="M6.500 7.200 L4.600 6.400 M6.500 7.200 L9.500 7.600" stroke="#b0672c" stroke-width="0.8" fill="none" stroke-linecap="round"/></svg></div></div>
<div class="t" style="left:66.4px;top:507px;width:109.6px;height:17px;letter-spacing:-0.016px;word-spacing:0.016px;">P-core 5 Частота</div>
<div class="v" style="left:176px;top:507px;height:17px;background:#14213b;"><span style="letter-spacing:-0.100px">5,000.0</span> <span style="margin-left:-0.06px">МГц</span></div>
<div class="v" style="left:256px;top:507px;height:17px;background:#1b1b1b;"><span style="letter-spacing:-0.100px">5,000.0</span> <span style="margin-left:-0.06px">МГц</span></div>
<div class="v" style="left:336px;top:507px;height:17px;background:#1b1b1b;"><span style="letter-spacing:-0.100px">5,001.2</span> <span style="margin-left:-0.06px">МГц</span></div>
<div class="v" style="left:416px;top:507px;height:17px;background:#1b1b1b;"><span style="letter-spacing:-0.100px">5,000.2</span> <span style="margin-left:-0.06px">МГц</span></div>
<div class="a ic" style="left:50px;top:525px;width:13.2px;height:14.2px"><div style="left:0.90px;top:0.30px;width:12.2px;height:13.2px"><svg width="12.2" height="13.2" viewBox="0 0 13 14"><ellipse cx="6.5" cy="7.600" rx="6" ry="5.900" fill="#8a8a8a" fill-opacity="0.75"/><circle cx="6.5" cy="6.5" r="6.1" fill="url(#gBez)"/><circle cx="6.5" cy="6.5" r="5.1" fill="none" stroke="#8a8a8a" stroke-width="0.75"/><circle cx="6.5" cy="6.700" r="4.700" fill="url(#gFace)"/><path d="M6.500 7.200 L4.600 6.400 M6.500 7.200 L9.500 7.600" stroke="#b0672c" stroke-width="0.8" fill="none" stroke-linecap="round"/></svg></div></div>
<div class="t" style="left:66.4px;top:524px;width:109.6px;height:17px;letter-spacing:-0.016px;word-spacing:0.016px;">E-core 6 Частота</div>
<div class="v" style="left:176px;top:524px;height:17px;background:#121e37;"><span style="letter-spacing:-0.100px">4,000.0</span> <span style="margin-left:-0.06px">МГц</span></div>
<div class="v" style="left:256px;top:524px;height:17px;"><span style="letter-spacing:-0.100px">4,000.0</span> <span style="margin-left:-0.06px">МГц</span></div>
<div class="v" style="left:336px;top:524px;height:17px;"><span style="letter-spacing:-0.100px">4,001.0</span> <span style="margin-left:-0.06px">МГц</span></div>
<div class="v" style="left:416px;top:524px;height:17px;"><span style="letter-spacing:-0.100px">4,000.1</span> <span style="margin-left:-0.06px">МГц</span></div>
<div style="left:65px;top:541px;width:109px;height:17px;background:#1b1b1b"></div>
<div class="a ic" style="left:50px;top:542px;width:13.2px;height:14.2px"><div style="left:0.90px;top:0.30px;width:12.2px;height:13.2px"><svg width="12.2" height="13.2" viewBox="0 0 13 14"><ellipse cx="6.5" cy="7.600" rx="6" ry="5.900" fill="#8a8a8a" fill-opacity="0.75"/><circle cx="6.5" cy="6.5" r="6.1" fill="url(#gBez)"/><circle cx="6.5" cy="6.5" r="5.1" fill="none" stroke="#8a8a8a" stroke-width="0.75"/><circle cx="6.5" cy="6.700" r="4.700" fill="url(#gFace)"/><path d="M6.500 7.200 L4.600 6.400 M6.500 7.200 L9.500 7.600" stroke="#b0672c" stroke-width="0.8" fill="none" stroke-linecap="round"/></svg></div></div>
<div class="t" style="left:66.4px;top:541px;width:109.6px;height:17px;letter-spacing:-0.016px;word-spacing:0.016px;">E-core 7 Частота</div>
<div class="v" style="left:176px;top:541px;height:17px;background:#14213b;"><span style="letter-spacing:-0.100px">4,000.0</span> <span style="margin-left:-0.06px">МГц</span></div>
<div class="v" style="left:256px;top:541px;height:17px;background:#1b1b1b;"><span style="letter-spacing:-0.100px">4,000.0</span> <span style="margin-left:-0.06px">МГц</span></div>
<div class="v" style="left:336px;top:541px;height:17px;background:#1b1b1b;"><span style="letter-spacing:-0.100px">4,001.0</span> <span style="margin-left:-0.06px">МГц</span></div>
<div class="v" style="left:416px;top:541px;height:17px;background:#1b1b1b;"><span style="letter-spacing:-0.100px">4,000.1</span> <span style="margin-left:-0.06px">МГц</span></div>
<div class="a ic" style="left:50px;top:559px;width:13.2px;height:14.2px"><div style="left:0.90px;top:0.30px;width:12.2px;height:13.2px"><svg width="12.2" height="13.2" viewBox="0 0 13 14"><ellipse cx="6.5" cy="7.600" rx="6" ry="5.900" fill="#8a8a8a" fill-opacity="0.75"/><circle cx="6.5" cy="6.5" r="6.1" fill="url(#gBez)"/><circle cx="6.5" cy="6.5" r="5.1" fill="none" stroke="#8a8a8a" stroke-width="0.75"/><circle cx="6.5" cy="6.700" r="4.700" fill="url(#gFace)"/><path d="M6.500 7.200 L4.600 6.400 M6.500 7.200 L9.500 7.600" stroke="#b0672c" stroke-width="0.8" fill="none" stroke-linecap="round"/></svg></div></div>
<div class="t" style="left:66.4px;top:558px;width:109.6px;height:17px;letter-spacing:-0.016px;word-spacing:0.016px;">E-core 8 Частота</div>
<div class="v" style="left:176px;top:558px;height:17px;background:#121e37;"><span style="letter-spacing:-0.100px">4,000.0</span> <span style="margin-left:-0.06px">МГц</span></div>
<div class="v" style="left:256px;top:558px;height:17px;"><span style="letter-spacing:-0.100px">4,000.0</span> <span style="margin-left:-0.06px">МГц</span></div>
<div class="v" style="left:336px;top:558px;height:17px;"><span style="letter-spacing:-0.100px">4,001.0</span> <span style="margin-left:-0.06px">МГц</span></div>
<div class="v" style="left:416px;top:558px;height:17px;"><span style="letter-spacing:-0.100px">4,000.1</span> <span style="margin-left:-0.06px">МГц</span></div>
<div style="left:65px;top:575px;width:109px;height:17px;background:#1b1b1b"></div>
<div class="a ic" style="left:50px;top:576px;width:13.2px;height:14.2px"><div style="left:0.90px;top:0.30px;width:12.2px;height:13.2px"><svg width="12.2" height="13.2" viewBox="0 0 13 14"><ellipse cx="6.5" cy="7.600" rx="6" ry="5.900" fill="#8a8a8a" fill-opacity="0.75"/><circle cx="6.5" cy="6.5" r="6.1" fill="url(#gBez)"/><circle cx="6.5" cy="6.5" r="5.1" fill="none" stroke="#8a8a8a" stroke-width="0.75"/><circle cx="6.5" cy="6.700" r="4.700" fill="url(#gFace)"/><path d="M6.500 7.200 L4.600 6.400 M6.500 7.200 L9.500 7.600" stroke="#b0672c" stroke-width="0.8" fill="none" stroke-linecap="round"/></svg></div></div>
<div class="t" style="left:66.4px;top:575px;width:109.6px;height:17px;letter-spacing:-0.016px;word-spacing:0.016px;">E-core 9 Частота</div>
<div class="v" style="left:176px;top:575px;height:17px;background:#14213b;"><span style="letter-spacing:-0.100px">4,000.0</span> <span style="margin-left:-0.06px">МГц</span></div>
<div class="v" style="left:256px;top:575px;height:17px;background:#1b1b1b;"><span style="letter-spacing:-0.100px">4,000.0</span> <span style="margin-left:-0.06px">МГц</span></div>
<div class="v" style="left:336px;top:575px;height:17px;background:#1b1b1b;"><span style="letter-spacing:-0.100px">4,001.0</span> <span style="margin-left:-0.06px">МГц</span></div>
<div class="v" style="left:416px;top:575px;height:17px;background:#1b1b1b;"><span style="letter-spacing:-0.100px">4,000.1</span> <span style="margin-left:-0.06px">МГц</span></div>
<div class="a ic" style="left:34px;top:593px;width:13.2px;height:14.2px"><div style="left:0.80px;top:0.30px;width:12.2px;height:13.2px"><svg width="12.2" height="13.2" viewBox="0 0 13 14"><ellipse cx="6.5" cy="7.600" rx="6" ry="5.900" fill="#8a8a8a" fill-opacity="0.75"/><circle cx="6.5" cy="6.5" r="6.1" fill="url(#gBez)"/><circle cx="6.5" cy="6.5" r="5.1" fill="none" stroke="#8a8a8a" stroke-width="0.75"/><circle cx="6.5" cy="6.700" r="4.700" fill="url(#gFace)"/><path d="M6.500 7.200 L4.600 6.400 M6.500 7.200 L9.500 7.600" stroke="#b0672c" stroke-width="0.8" fill="none" stroke-linecap="round"/></svg></div></div>
<div class="t" style="left:50.6px;top:592px;width:125.4px;height:17px;letter-spacing:0.052px;word-spacing:-0.052px;">Частота шины</div>
<div class="v" style="left:176px;top:592px;height:17px;"><span style="letter-spacing:-0.105px">100.0</span> <span style="margin-left:-0.06px">МГц</span></div>
<div class="v" style="left:256px;top:592px;height:17px;"><span style="letter-spacing:-0.105px">100.0</span> <span style="margin-left:-0.06px">МГц</span></div>
<div class="v" style="left:336px;top:592px;height:17px;"><span style="letter-spacing:-0.105px">100.0</span> <span style="margin-left:-0.06px">МГц</span></div>
<div class="v" style="left:416px;top:592px;height:17px;"><span style="letter-spacing:-0.105px">100.0</span> <span style="margin-left:-0.06px">МГц</span></div>
<div style="left:49px;top:609px;width:125px;height:17px;background:#1b1b1b"></div>
<div class="a ic" style="left:34px;top:610px;width:13.2px;height:14.2px"><div style="left:0.80px;top:0.30px;width:12.2px;height:13.2px"><svg width="12.2" height="13.2" viewBox="0 0 13 14"><ellipse cx="6.5" cy="7.600" rx="6" ry="5.900" fill="#8a8a8a" fill-opacity="0.75"/><circle cx="6.5" cy="6.5" r="6.1" fill="url(#gBez)"/><circle cx="6.5" cy="6.5" r="5.1" fill="none" stroke="#8a8a8a" stroke-width="0.75"/><circle cx="6.5" cy="6.700" r="4.700" fill="url(#gFace)"/><path d="M6.500 7.200 L4.600 6.400 M6.500 7.200 L9.500 7.600" stroke="#b0672c" stroke-width="0.8" fill="none" stroke-linecap="round"/></svg></div></div>
<div class="t" style="left:50.6px;top:609px;width:125.4px;height:17px;letter-spacing:-0.192px;word-spacing:0.192px;">Ring/LLC Частота</div>
<div class="v" style="left:176px;top:609px;height:17px;background:#14213b;"><span style="letter-spacing:-0.100px">4,200.0</span> <span style="margin-left:-0.06px">МГц</span></div>
<div class="v" style="left:256px;top:609px;height:17px;background:#1b1b1b;"><span style="letter-spacing:-0.100px">4,200.0</span> <span style="margin-left:-0.06px">МГц</span></div>
<div class="v" style="left:336px;top:609px;height:17px;background:#1b1b1b;"><span style="letter-spacing:-0.100px">4,201.0</span> <span style="margin-left:-0.06px">МГц</span></div>
<div class="v" style="left:416px;top:609px;height:17px;background:#1b1b1b;"><span style="letter-spacing:-0.100px">4,200.1</span> <span style="margin-left:-0.06px">МГц</span></div>
<svg class="a" style="left:33px;top:629px" width="11" height="11" viewBox="0 0 11 11"><path transform="translate(0.70 0.50)" d="M2.600 0.900 L6.700 5 L2.600 9.100" fill="none" stroke="#ababab" stroke-width="1.7"/></svg>
<div class="a ic" style="left:50px;top:627px;width:13.2px;height:14.2px"><div style="left:0.90px;top:0.30px;width:12.2px;height:13.2px"><svg width="12.2" height="13.2" viewBox="0 0 13 14"><ellipse cx="6.5" cy="7.600" rx="6" ry="5.900" fill="#8a8a8a" fill-opacity="0.75"/><circle cx="6.5" cy="6.5" r="6.1" fill="url(#gBez)"/><circle cx="6.5" cy="6.5" r="5.1" fill="none" stroke="#8a8a8a" stroke-width="0.75"/><circle cx="6.5" cy="6.700" r="4.700" fill="url(#gFace)"/><path d="M6.500 7.200 L4.600 6.400 M6.500 7.200 L9.500 7.600" stroke="#b0672c" stroke-width="0.8" fill="none" stroke-linecap="round"/></svg></div></div>
<div class="t" style="left:66.4px;top:626px;width:109.6px;height:17px;letter-spacing:0.112px;word-spacing:-0.112px;">Основные эффект...</div>
<div class="v" style="left:176px;top:626px;height:17px;background:#121e37;"><span style="letter-spacing:-0.102px">31.1</span> <span style="margin-left:-0.06px">МГц</span></div>
<div class="v" style="left:256px;top:626px;height:17px;"><span style="letter-spacing:-0.097px">0.1</span> <span style="margin-left:-0.06px">МГц</span></div>
<div class="v" style="left:336px;top:626px;height:17px;"><span style="letter-spacing:-0.100px">4,998.4</span> <span style="margin-left:-0.06px">МГц</span></div>
<div class="v" style="left:416px;top:626px;height:17px;"><span style="letter-spacing:-0.100px">4,047.5</span> <span style="margin-left:-0.06px">МГц</span></div>
<div style="left:49px;top:643px;width:125px;height:17px;background:#1b1b1b"></div>
<div class="a ic" style="left:34px;top:644px;width:13.2px;height:14.2px"><div style="left:0.80px;top:0.30px;width:12.2px;height:13.2px"><svg width="12.2" height="13.2" viewBox="0 0 13 14"><ellipse cx="6.5" cy="7.600" rx="6" ry="5.900" fill="#8a8a8a" fill-opacity="0.75"/><circle cx="6.5" cy="6.5" r="6.1" fill="url(#gBez)"/><circle cx="6.5" cy="6.5" r="5.1" fill="none" stroke="#8a8a8a" stroke-width="0.75"/><circle cx="6.5" cy="6.700" r="4.700" fill="url(#gFace)"/><path d="M6.500 7.200 L4.600 6.400 M6.500 7.200 L9.500 7.600" stroke="#b0672c" stroke-width="0.8" fill="none" stroke-linecap="round"/></svg></div></div>
<div class="t" style="left:50.6px;top:643px;width:125.4px;height:17px;letter-spacing:0.087px;word-spacing:-0.087px;">Средняя эффективн...</div>
<div class="v" style="left:176px;top:643px;height:17px;background:#14213b;"><span style="letter-spacing:-0.102px">35.6</span> <span style="margin-left:-0.06px">МГц</span></div>
<div class="v" style="left:256px;top:643px;height:17px;background:#1b1b1b;"><span style="letter-spacing:-0.102px">17.1</span> <span style="margin-left:-0.06px">МГц</span></div>
<div class="v" style="left:336px;top:643px;height:17px;background:#1b1b1b;"><span style="letter-spacing:-0.100px">4,840.3</span> <span style="margin-left:-0.06px">МГц</span></div>
<div class="v" style="left:416px;top:643px;height:17px;background:#1b1b1b;"><span style="letter-spacing:-0.100px">4,134.0</span> <span style="margin-left:-0.06px">МГц</span></div>
<svg class="a" style="left:33px;top:663px" width="11" height="11" viewBox="0 0 11 11"><path transform="translate(0.70 0.50)" d="M2.600 0.900 L6.700 5 L2.600 9.100" fill="none" stroke="#ababab" stroke-width="1.7"/></svg>
<div class="a ic" style="left:50px;top:661px;width:13.2px;height:14.2px"><div style="left:0.90px;top:0.30px;width:12.2px;height:13.2px"><svg width="12.2" height="13.2" viewBox="0 0 13 14"><ellipse cx="6.5" cy="7.600" rx="6" ry="5.900" fill="#8a8a8a" fill-opacity="0.75"/><circle cx="6.5" cy="6.5" r="6.1" fill="url(#gBez)"/><circle cx="6.5" cy="6.5" r="5.1" fill="none" stroke="#8a8a8a" stroke-width="0.75"/><circle cx="6.5" cy="6.700" r="4.700" fill="url(#gFace)"/><path d="M6.500 7.200 L4.600 6.400 M6.500 7.200 L9.500 7.600" stroke="#b0672c" stroke-width="0.8" fill="none" stroke-linecap="round"/></svg></div></div>
<div class="t" style="left:66.4px;top:660px;width:109.6px;height:17px;letter-spacing:-0.093px;word-spacing:0.093px;">Ядер использование</div>
<div class="v" style="left:176px;top:660px;height:17px;background:#121e37;"><span style="letter-spacing:-0.097px">1.1</span> <span style="margin-left:-0.06px">%</span></div>
<div class="v" style="left:256px;top:660px;height:17px;"><span style="letter-spacing:-0.097px">0.0</span> <span style="margin-left:-0.06px">%</span></div>
<div class="v" style="left:336px;top:660px;height:17px;"><span style="letter-spacing:-0.105px">100.0</span> <span style="margin-left:-0.06px">%</span></div>
<div class="v" style="left:416px;top:660px;height:17px;"><span style="letter-spacing:-0.102px">88.9</span> <span style="margin-left:-0.06px">%</span></div>
<div style="left:49px;top:677px;width:125px;height:17px;background:#1b1b1b"></div>
<div class="a ic" style="left:34px;top:678px;width:13.2px;height:14.2px"><div style="left:0.80px;top:0.30px;width:12.2px;height:13.2px"><svg width="12.2" height="13.2" viewBox="0 0 13 14"><ellipse cx="6.5" cy="7.600" rx="6" ry="5.900" fill="#8a8a8a" fill-opacity="0.75"/><circle cx="6.5" cy="6.5" r="6.1" fill="url(#gBez)"/><circle cx="6.5" cy="6.5" r="5.1" fill="none" stroke="#8a8a8a" stroke-width="0.75"/><circle cx="6.5" cy="6.700" r="4.700" fill="url(#gFace)"/><path d="M6.500 7.200 L4.600 6.400 M6.500 7.200 L9.500 7.600" stroke="#b0672c" stroke-width="0.8" fill="none" stroke-linecap="round"/></svg></div></div>
<div class="t" style="left:50.6px;top:677px;width:125.4px;height:17px;letter-spacing:-0.076px;word-spacing:0.076px;">Максимальное испол...</div>
<div class="v" style="left:176px;top:677px;height:17px;background:#14213b;"><span style="letter-spacing:-0.102px">15.1</span> <span style="margin-left:-0.06px">%</span></div>
<div class="v" style="left:256px;top:677px;height:17px;background:#1b1b1b;"><span style="letter-spacing:-0.097px">2.7</span> <span style="margin-left:-0.06px">%</span></div>
<div class="v" style="left:336px;top:677px;height:17px;background:#1b1b1b;"><span style="letter-spacing:-0.105px">100.0</span> <span style="margin-left:-0.06px">%</span></div>
<div class="v" style="left:416px;top:677px;height:17px;background:#1b1b1b;"><span style="letter-spacing:-0.102px">90.6</span> <span style="margin-left:-0.06px">%</span></div>
<div class="a ic" style="left:34px;top:695px;width:13.2px;height:14.2px"><div style="left:0.80px;top:0.30px;width:12.2px;height:13.2px"><svg width="12.2" height="13.2" viewBox="0 0 13 14"><ellipse cx="6.5" cy="7.600" rx="6" ry="5.900" fill="#8a8a8a" fill-opacity="0.75"/><circle cx="6.5" cy="6.5" r="6.1" fill="url(#gBez)"/><circle cx="6.5" cy="6.5" r="5.1" fill="none" stroke="#8a8a8a" stroke-width="0.75"/><circle cx="6.5" cy="6.700" r="4.700" fill="url(#gFace)"/><path d="M6.500 7.200 L4.600 6.400 M6.500 7.200 L9.500 7.600" stroke="#b0672c" stroke-width="0.8" fill="none" stroke-linecap="round"/></svg></div></div>
<div class="t" style="left:50.6px;top:694px;width:125.4px;height:17px;letter-spacing:0.049px;word-spacing:-0.049px;">Общая загрузка ЦП</div>
<div class="v" style="left:176px;top:694px;height:17px;background:#121e37;"><span style="letter-spacing:-0.097px">1.1</span> <span style="margin-left:-0.06px">%</span></div>
<div class="v" style="left:256px;top:694px;height:17px;"><span style="letter-spacing:-0.097px">0.3</span> <span style="margin-left:-0.06px">%</span></div>
<div class="v" style="left:336px;top:694px;height:17px;"><span style="letter-spacing:-0.105px">100.0</span> <span style="margin-left:-0.06px">%</span></div>
<div class="v" style="left:416px;top:694px;height:17px;"><span style="letter-spacing:-0.102px">88.9</span> <span style="margin-left:-0.06px">%</span></div>
<div style="left:49px;top:711px;width:125px;height:17px;background:#1b1b1b"></div>
<div class="a ic" style="left:34px;top:712px;width:13.2px;height:14.2px"><div style="left:0.80px;top:0.30px;width:12.2px;height:13.2px"><svg width="12.2" height="13.2" viewBox="0 0 13 14"><ellipse cx="6.5" cy="7.600" rx="6" ry="5.900" fill="#8a8a8a" fill-opacity="0.75"/><circle cx="6.5" cy="6.5" r="6.1" fill="url(#gBez)"/><circle cx="6.5" cy="6.5" r="5.1" fill="none" stroke="#8a8a8a" stroke-width="0.75"/><circle cx="6.5" cy="6.700" r="4.700" fill="url(#gFace)"/><path d="M6.500 7.200 L4.600 6.400 M6.500 7.200 L9.500 7.600" stroke="#b0672c" stroke-width="0.8" fill="none" stroke-linecap="round"/></svg></div></div>
<div class="t" style="left:50.6px;top:711px;width:125.4px;height:17px;letter-spacing:0.080px;word-spacing:-0.080px;">Модуляция часов по ...</div>
<div class="v" style="left:176px;top:711px;height:17px;background:#1b1b1b;"><span style="letter-spacing:-0.105px">100.0</span> <span style="margin-left:-0.06px">%</span></div>
<div class="v" style="left:256px;top:711px;height:17px;background:#1b1b1b;"><span style="letter-spacing:-0.105px">100.0</span> <span style="margin-left:-0.06px">%</span></div>
<div class="v" style="left:336px;top:711px;height:17px;background:#1b1b1b;"><span style="letter-spacing:-0.105px">100.0</span> <span style="margin-left:-0.06px">%</span></div>
<div class="v" style="left:416px;top:711px;height:17px;background:#1b1b1b;"><span style="letter-spacing:-0.105px">100.0</span> <span style="margin-left:-0.06px">%</span></div>
<svg class="a" style="left:33px;top:731px" width="11" height="11" viewBox="0 0 11 11"><path transform="translate(0.70 0.50)" d="M2.600 0.900 L6.700 5 L2.600 9.100" fill="none" stroke="#ababab" stroke-width="1.7"/></svg>
<div class="a ic" style="left:50px;top:729px;width:13.2px;height:14.2px"><div style="left:0.90px;top:0.30px;width:12.2px;height:13.2px"><svg width="12.2" height="13.2" viewBox="0 0 13 14"><ellipse cx="6.5" cy="7.600" rx="6" ry="5.900" fill="#8a8a8a" fill-opacity="0.75"/><circle cx="6.5" cy="6.5" r="6.1" fill="url(#gBez)"/><circle cx="6.5" cy="6.5" r="5.1" fill="none" stroke="#8a8a8a" stroke-width="0.75"/><circle cx="6.5" cy="6.700" r="4.700" fill="url(#gFace)"/><path d="M6.500 7.200 L4.600 6.400 M6.500 7.200 L9.500 7.600" stroke="#b0672c" stroke-width="0.8" fill="none" stroke-linecap="round"/></svg></div></div>
<div class="t" style="left:66.4px;top:728px;width:109.6px;height:17px;letter-spacing:-0.042px;word-spacing:0.042px;">Использование ядра</div>
<div class="v" style="left:176px;top:728px;height:17px;background:#121e37;"><span style="letter-spacing:-0.097px">1.4</span> <span style="margin-left:-0.06px">%</span></div>
<div class="v" style="left:256px;top:728px;height:17px;"><span style="letter-spacing:-0.097px">0.0</span> <span style="margin-left:-0.06px">%</span></div>
<div class="v" style="left:336px;top:728px;height:17px;"><span style="letter-spacing:-0.105px">134.5</span> <span style="margin-left:-0.06px">%</span></div>
<div class="v" style="left:416px;top:728px;height:17px;"><span style="letter-spacing:0.058px">112.9</span> <span style="margin-left:-0.06px">%</span></div>
<div style="left:49px;top:745px;width:125px;height:17px;background:#1b1b1b"></div>
<div class="a ic" style="left:34px;top:746px;width:13.2px;height:14.2px"><div style="left:0.80px;top:0.30px;width:12.2px;height:13.2px"><svg width="12.2" height="13.2" viewBox="0 0 13 14"><ellipse cx="6.5" cy="7.600" rx="6" ry="5.900" fill="#8a8a8a" fill-opacity="0.75"/><circle cx="6.5" cy="6.5" r="6.1" fill="url(#gBez)"/><circle cx="6.5" cy="6.5" r="5.1" fill="none" stroke="#8a8a8a" stroke-width="0.75"/><circle cx="6.5" cy="6.700" r="4.700" fill="url(#gFace)"/><path d="M6.500 7.200 L4.600 6.400 M6.500 7.200 L9.500 7.600" stroke="#b0672c" stroke-width="0.8" fill="none" stroke-linecap="round"/></svg></div></div>
<div class="t" style="left:50.6px;top:745px;width:125.4px;height:17px;letter-spacing:0.049px;word-spacing:-0.049px;">Общая загрузка ЦП</div>
<div class="v" style="left:176px;top:745px;height:17px;background:#14213b;"><span style="letter-spacing:-0.097px">1.4</span> <span style="margin-left:-0.06px">%</span></div>
<div class="v" style="left:256px;top:745px;height:17px;background:#1b1b1b;"><span style="letter-spacing:-0.097px">0.4</span> <span style="margin-left:-0.06px">%</span></div>
<div class="v" style="left:336px;top:745px;height:17px;background:#1b1b1b;"><span style="letter-spacing:-0.105px">127.1</span> <span style="margin-left:-0.06px">%</span></div>
<div class="v" style="left:416px;top:745px;height:17px;background:#1b1b1b;"><span style="letter-spacing:0.058px">112.9</span> <span style="margin-left:-0.06px">%</span></div>
<svg class="a" style="left:33px;top:765px" width="11" height="11" viewBox="0 0 11 11"><path transform="translate(0.70 0.50)" d="M2.600 0.900 L6.700 5 L2.600 9.100" fill="none" stroke="#ababab" stroke-width="1.7"/></svg>
<div class="a ic" style="left:50px;top:763px;width:13.2px;height:14.2px"><div style="left:0.90px;top:0.30px;width:12.2px;height:13.2px"><svg width="12.2" height="13.2" viewBox="0 0 13 14"><ellipse cx="6.5" cy="7.600" rx="6" ry="5.900" fill="#8a8a8a" fill-opacity="0.75"/><circle cx="6.5" cy="6.5" r="6.1" fill="url(#gBez)"/><circle cx="6.5" cy="6.5" r="5.1" fill="none" stroke="#8a8a8a" stroke-width="0.75"/><circle cx="6.5" cy="6.700" r="4.700" fill="url(#gFace)"/><path d="M6.500 7.200 L4.600 6.400 M6.500 7.200 L9.500 7.600" stroke="#b0672c" stroke-width="0.8" fill="none" stroke-linecap="round"/></svg></div></div>
<div class="t" style="left:66.4px;top:762px;width:109.6px;height:17px;letter-spacing:0.247px;word-spacing:-0.247px;">Умножители част...</div>
<div class="v" style="left:176px;top:762px;height:17px;"><span style="letter-spacing:-0.102px">46.0</span> <span style="margin-left:-0.06px">x</span></div>
<div class="v" style="left:256px;top:762px;height:17px;"><span style="letter-spacing:-0.102px">40.0</span> <span style="margin-left:-0.06px">x</span></div>
<div class="v" style="left:336px;top:762px;height:17px;"><span style="letter-spacing:-0.102px">50.0</span> <span style="margin-left:-0.06px">x</span></div>
<div class="v" style="left:416px;top:762px;height:17px;"><span style="letter-spacing:-0.102px">46.0</span> <span style="margin-left:-0.06px">x</span></div>
<div style="left:174px;top:201px;width:1px;height:585px;background:#0b1626"></div>
<div style="left:254px;top:201px;width:1px;height:585px;background:#0b1626"></div>
<div style="left:334px;top:201px;width:1px;height:585px;background:#0b1626"></div>
<div style="left:414px;top:201px;width:1px;height:585px;background:#0b1626"></div>
<div style="left:494px;top:201px;width:1px;height:585px;background:#0b1626"></div>
</div>
<div class="win" style="clip-path:inset(200px 0 156px 0)">
<div class="a ic" style="left:688px;top:201px;width:13.2px;height:14.2px"><div style="left:0.90px;top:0.30px;width:12.2px;height:13.2px"><svg width="12.2" height="13.2" viewBox="0 0 13 14"><ellipse cx="6.5" cy="7.600" rx="6" ry="5.900" fill="#8a8a8a" fill-opacity="0.75"/><circle cx="6.5" cy="6.5" r="6.1" fill="url(#gBez)"/><circle cx="6.5" cy="6.5" r="5.1" fill="none" stroke="#8a8a8a" stroke-width="0.75"/><circle cx="6.5" cy="6.700" r="4.700" fill="url(#gFace)"/><path d="M6.500 7.200 L4.600 6.400 M6.500 7.200 L9.500 7.600" stroke="#b0672c" stroke-width="0.8" fill="none" stroke-linecap="round"/></svg></div></div>
<div class="t" style="left:704.4px;top:200px;width:109.6px;height:17px;letter-spacing:-0.084px;word-spacing:0.084px;">IA: Max Turbo Limit</div>
<div class="v" style="left:814px;top:200px;height:17px;"><span style="letter-spacing:0.3px;margin-right:0.2px">Нет</span></div>
<div class="v" style="left:894px;top:200px;height:17px;"><span style="letter-spacing:0.3px;margin-right:0.2px">Нет</span></div>
<div class="v" style="left:974px;top:200px;height:17px;"><span style="letter-spacing:0.3px;margin-right:0.2px">Нет</span></div>
<div class="v" style="left:1054px;top:200px;height:17px;"></div>
<div style="left:703px;top:217px;width:109px;height:17px;background:#1b1b1b"></div>
<div class="a ic" style="left:688px;top:218px;width:13.2px;height:14.2px"><div style="left:0.90px;top:0.30px;width:12.2px;height:13.2px"><svg width="12.2" height="13.2" viewBox="0 0 13 14"><ellipse cx="6.5" cy="7.600" rx="6" ry="5.900" fill="#8a8a8a" fill-opacity="0.75"/><circle cx="6.5" cy="6.5" r="6.1" fill="url(#gBez)"/><circle cx="6.5" cy="6.5" r="5.1" fill="none" stroke="#8a8a8a" stroke-width="0.75"/><circle cx="6.5" cy="6.700" r="4.700" fill="url(#gFace)"/><path d="M6.500 7.200 L4.600 6.400 M6.500 7.200 L9.500 7.600" stroke="#b0672c" stroke-width="0.8" fill="none" stroke-linecap="round"/></svg></div></div>
<div class="t" style="left:704.4px;top:217px;width:109.6px;height:17px;letter-spacing:0.324px;word-spacing:-0.324px;">IA: Турбо затухан...</div>
<div class="v" style="left:814px;top:217px;height:17px;background:#1b1b1b;"><span style="letter-spacing:0.3px;margin-right:0.2px">Нет</span></div>
<div class="v" style="left:894px;top:217px;height:17px;background:#1b1b1b;"><span style="letter-spacing:0.3px;margin-right:0.2px">Нет</span></div>
<div class="v" style="left:974px;top:217px;height:17px;background:#1b1b1b;"><span style="letter-spacing:0.3px;margin-right:0.2px">Нет</span></div>
<div class="v" style="left:1054px;top:217px;height:17px;background:#1b1b1b;"></div>
<div class="a ic" style="left:688px;top:235px;width:13.2px;height:14.2px"><div style="left:0.90px;top:0.30px;width:12.2px;height:13.2px"><svg width="12.2" height="13.2" viewBox="0 0 13 14"><ellipse cx="6.5" cy="7.600" rx="6" ry="5.900" fill="#8a8a8a" fill-opacity="0.75"/><circle cx="6.5" cy="6.5" r="6.1" fill="url(#gBez)"/><circle cx="6.5" cy="6.5" r="5.1" fill="none" stroke="#8a8a8a" stroke-width="0.75"/><circle cx="6.5" cy="6.700" r="4.700" fill="url(#gFace)"/><path d="M6.500 7.200 L4.600 6.400 M6.500 7.200 L9.500 7.600" stroke="#b0672c" stroke-width="0.8" fill="none" stroke-linecap="round"/></svg></div></div>
<div class="t" style="left:704.4px;top:234px;width:109.6px;height:17px;letter-spacing:0.027px;word-spacing:-0.027px;">IA: Thermal Velocit...</div>
<div class="v" style="left:814px;top:234px;height:17px;"><span style="letter-spacing:0.3px;margin-right:0.2px">Нет</span></div>
<div class="v" style="left:894px;top:234px;height:17px;"><span style="letter-spacing:0.3px;margin-right:0.2px">Нет</span></div>
<div class="v" style="left:974px;top:234px;height:17px;"><span style="letter-spacing:0.3px;margin-right:0.2px">Нет</span></div>
<div class="v" style="left:1054px;top:234px;height:17px;"></div>
<div style="left:703px;top:251px;width:109px;height:17px;background:#1b1b1b"></div>
<svg class="a" style="left:671px;top:254px" width="11" height="11" viewBox="0 0 11 11"><path transform="translate(0.70 0.50)" d="M2.600 0.900 L6.700 5 L2.600 9.100" fill="none" stroke="#ababab" stroke-width="1.7"/></svg>
<div class="a ic" style="left:688px;top:252px;width:13.2px;height:14.2px"><div style="left:0.90px;top:0.30px;width:12.2px;height:13.2px"><svg width="12.2" height="13.2" viewBox="0 0 13 14"><ellipse cx="6.5" cy="7.600" rx="6" ry="5.900" fill="#8a8a8a" fill-opacity="0.75"/><circle cx="6.5" cy="6.5" r="6.1" fill="url(#gBez)"/><circle cx="6.5" cy="6.5" r="5.1" fill="none" stroke="#8a8a8a" stroke-width="0.75"/><circle cx="6.5" cy="6.700" r="4.700" fill="url(#gFace)"/><path d="M6.500 7.200 L4.600 6.400 M6.500 7.200 L9.500 7.600" stroke="#b0672c" stroke-width="0.8" fill="none" stroke-linecap="round"/></svg></div></div>
<div class="t" style="left:704.4px;top:251px;width:109.6px;height:17px;letter-spacing:-0.518px;word-spacing:0.518px;">GT Limit Reasons</div>
<div class="v" style="left:814px;top:251px;height:17px;background:#1b1b1b;"><span style="letter-spacing:0.3px;margin-right:0.2px">Нет</span></div>
<div class="v" style="left:894px;top:251px;height:17px;background:#1b1b1b;"><span style="letter-spacing:0.3px;margin-right:0.2px">Нет</span></div>
<div class="v" style="left:974px;top:251px;height:17px;background:#1b1b1b;"><span style="letter-spacing:0.3px;margin-right:0.2px">Нет</span></div>
<div class="v" style="left:1054px;top:251px;height:17px;background:#1b1b1b;"></div>
<div style="left:703px;top:268px;width:109px;height:17px;background:#1b1b1b"></div>
<svg class="a" style="left:671px;top:271px" width="11" height="11" viewBox="0 0 11 11"><path transform="translate(0.70 0.50)" d="M2.600 0.900 L6.700 5 L2.600 9.100" fill="none" stroke="#ababab" stroke-width="1.7"/></svg>
<div class="a ic" style="left:688px;top:269px;width:13.2px;height:14.2px"><div style="left:0.90px;top:0.30px;width:12.2px;height:13.2px"><svg width="12.2" height="13.2" viewBox="0 0 13 14"><ellipse cx="6.5" cy="7.600" rx="6" ry="5.900" fill="#8a8a8a" fill-opacity="0.75"/><circle cx="6.5" cy="6.5" r="6.1" fill="url(#gBez)"/><circle cx="6.5" cy="6.5" r="5.1" fill="none" stroke="#8a8a8a" stroke-width="0.75"/><circle cx="6.5" cy="6.700" r="4.700" fill="url(#gFace)"/><path d="M6.500 7.200 L4.600 6.400 M6.500 7.200 L9.500 7.600" stroke="#b0672c" stroke-width="0.8" fill="none" stroke-linecap="round"/></svg></div></div>
<div class="t" style="left:704.4px;top:268px;width:109.6px;height:17px;letter-spacing:-0.378px;word-spacing:0.378px;">Ring Limit Reasons</div>
<div class="v" style="left:814px;top:268px;height:17px;background:#1b1b1b;"><span style="letter-spacing:0.3px;margin-right:0.2px">Нет</span></div>
<div class="v" style="left:894px;top:268px;height:17px;background:#1b1b1b;"><span style="letter-spacing:0.3px;margin-right:0.2px">Нет</span></div>
<div class="v" style="left:974px;top:268px;height:17px;background:#1b1b1b;"><span style="letter-spacing:0.3px;margin-right:0.2px">Нет</span></div>
<div class="v" style="left:1054px;top:268px;height:17px;background:#1b1b1b;"></div>
<div class="v" style="left:814px;top:285px;height:17px;"></div>
<div class="v" style="left:894px;top:285px;height:17px;"></div>
<div class="v" style="left:974px;top:285px;height:17px;"></div>
<div class="v" style="left:1054px;top:285px;height:17px;"></div>
<div style="left:687px;top:302px;width:125px;height:17px;background:#242424"></div>
<svg class="a" style="left:655px;top:305px" width="11" height="11" viewBox="0 0 11 11"><path transform="translate(0.55 0.50)" d="M0.900 2.300 L5 6.400 L9.100 2.300" fill="none" stroke="#ababab" stroke-width="1.7"/></svg>
<div class="a ic" style="left:673px;top:302px;width:13px;height:15px"><div style="left:0.20px;top:0.80px;width:12px;height:14px"><svg width="12" height="14" viewBox="0 0 12 14"><rect x="2.1" y="0.2" width="7.800" height="13.600" rx="1.4" fill="url(#gChip)"/><path d="M0.500 2.900h1.300M0.500 5.600h1.300M0.500 8.300h1.300M0.500 11h1.300M10.200 2.900h1.300M10.200 5.600h1.300M10.200 8.300h1.300M10.200 11h1.300" stroke="#c4c4c4" stroke-width="1.2"/></svg></div></div>
<div class="t" style="left:689.2px;top:302px;width:124.8px;height:17px;font-style:italic;letter-spacing:-0.397px;word-spacing:0.397px;">MSI MAG Z690 TOMAH...</div>
<div class="v" style="left:814px;top:302px;height:17px;background:#242424;"></div>
<div class="v" style="left:894px;top:302px;height:17px;background:#242424;"></div>
<div class="v" style="left:974px;top:302px;height:17px;background:#242424;"></div>
<div class="v" style="left:1054px;top:302px;height:17px;background:#242424;"></div>
<div class="a ic" style="left:674px;top:319px;width:10px;height:18px"><div style="left:0.10px;top:0.00px;width:9px;height:17px"><svg width="9" height="17" viewBox="0 0 9 17"><path d="M1.900 2.700 a2.600 2.600 0 0 1 5.200 0 V9.300 a4.300 4.300 0 1 1 -5.200 0 Z" fill="url(#gTh)"/><path d="M3.700 3 a0.800 0.800 0 0 1 1.600 0 V4.600 H3.700 Z" fill="#7ab4ea"/><rect x="3.700" y="4.500" width="1.600" height="7.500" fill="#ff5a00"/><circle cx="4.500" cy="12.500" r="2.100" fill="#ff5a00"/></svg></div></div>
<div class="t" style="left:688.6px;top:319px;width:125.4px;height:17px;color:#7e20ee;letter-spacing:-0.744px;">ЦП</div>
<div class="v" style="left:814px;top:319px;height:17px;background:#121e37;color:#7e20ee;"><span style="letter-spacing:-0.102px">33.0</span> <span style="margin-left:-0.06px">°C</span></div>
<div class="v" style="left:894px;top:319px;height:17px;color:#7e20ee;"><span style="letter-spacing:-0.102px">31.5</span> <span style="margin-left:-0.06px">°C</span></div>
<div class="v" style="left:974px;top:319px;height:17px;color:#7e20ee;"><span style="letter-spacing:-0.102px">87.0</span> <span style="margin-left:-0.06px">°C</span></div>
<div class="v" style="left:1054px;top:319px;height:17px;color:#7e20ee;"><span style="letter-spacing:-0.102px">78.5</span> <span style="margin-left:-0.06px">°C</span></div>
<div style="left:687px;top:336px;width:125px;height:17px;background:#1b1b1b"></div>
<div class="a ic" style="left:674px;top:336px;width:10px;height:18px"><div style="left:0.10px;top:0.00px;width:9px;height:17px"><svg width="9" height="17" viewBox="0 0 9 17"><path d="M1.900 2.700 a2.600 2.600 0 0 1 5.200 0 V9.300 a4.300 4.300 0 1 1 -5.200 0 Z" fill="url(#gTh)"/><path d="M3.700 3 a0.800 0.800 0 0 1 1.600 0 V4.600 H3.700 Z" fill="#7ab4ea"/><rect x="3.700" y="4.500" width="1.600" height="7.500" fill="#ff5a00"/><circle cx="4.500" cy="12.500" r="2.100" fill="#ff5a00"/></svg></div></div>
<div class="t" style="left:688.6px;top:336px;width:125.4px;height:17px;letter-spacing:-0.317px;">Система</div>
<div class="v" style="left:814px;top:336px;height:17px;background:#1b1b1b;"><span style="letter-spacing:-0.102px">39.5</span> <span style="margin-left:-0.06px">°C</span></div>
<div class="v" style="left:894px;top:336px;height:17px;background:#1b1b1b;"><span style="letter-spacing:-0.102px">39.0</span> <span style="margin-left:-0.06px">°C</span></div>
<div class="v" style="left:974px;top:336px;height:17px;background:#1b1b1b;"><span style="letter-spacing:-0.102px">40.5</span> <span style="margin-left:-0.06px">°C</span></div>
<div class="v" style="left:1054px;top:336px;height:17px;background:#1b1b1b;"><span style="letter-spacing:-0.102px">39.6</span> <span style="margin-left:-0.06px">°C</span></div>
<div class="a ic" style="left:674px;top:353px;width:10px;height:18px"><div style="left:0.10px;top:0.00px;width:9px;height:17px"><svg width="9" height="17" viewBox="0 0 9 17"><path d="M1.900 2.700 a2.600 2.600 0 0 1 5.200 0 V9.300 a4.300 4.300 0 1 1 -5.200 0 Z" fill="url(#gTh)"/><path d="M3.700 3 a0.800 0.800 0 0 1 1.600 0 V4.600 H3.700 Z" fill="#7ab4ea"/><rect x="3.700" y="4.500" width="1.600" height="7.500" fill="#ff5a00"/><circle cx="4.500" cy="12.500" r="2.100" fill="#ff5a00"/></svg></div></div>
<div class="t" style="left:688.6px;top:353px;width:125.4px;height:17px;letter-spacing:-1.200px;">MOS</div>
<div class="v" style="left:814px;top:353px;height:17px;"><span style="letter-spacing:-0.102px">46.5</span> <span style="margin-left:-0.06px">°C</span></div>
<div class="v" style="left:894px;top:353px;height:17px;"><span style="letter-spacing:-0.102px">41.0</span> <span style="margin-left:-0.06px">°C</span></div>
<div class="v" style="left:974px;top:353px;height:17px;"><span style="letter-spacing:-0.102px">49.5</span> <span style="margin-left:-0.06px">°C</span></div>
<div class="v" style="left:1054px;top:353px;height:17px;"><span style="letter-spacing:-0.102px">46.9</span> <span style="margin-left:-0.06px">°C</span></div>
<div style="left:687px;top:370px;width:125px;height:17px;background:#1b1b1b"></div>
<div class="a ic" style="left:674px;top:370px;width:10px;height:18px"><div style="left:0.10px;top:0.00px;width:9px;height:17px"><svg width="9" height="17" viewBox="0 0 9 17"><path d="M1.900 2.700 a2.600 2.600 0 0 1 5.200 0 V9.300 a4.300 4.300 0 1 1 -5.200 0 Z" fill="url(#gTh)"/><path d="M3.700 3 a0.800 0.800 0 0 1 1.600 0 V4.600 H3.700 Z" fill="#7ab4ea"/><rect x="3.700" y="4.500" width="1.600" height="7.500" fill="#ff5a00"/><circle cx="4.500" cy="12.500" r="2.100" fill="#ff5a00"/></svg></div></div>
<div class="t" style="left:688.6px;top:370px;width:125.4px;height:17px;letter-spacing:-1.200px;">PCH</div>
<div class="v" style="left:814px;top:370px;height:17px;background:#1b1b1b;"><span style="letter-spacing:-0.102px">56.0</span> <span style="margin-left:-0.06px">°C</span></div>
<div class="v" style="left:894px;top:370px;height:17px;background:#1b1b1b;"><span style="letter-spacing:-0.102px">55.0</span> <span style="margin-left:-0.06px">°C</span></div>
<div class="v" style="left:974px;top:370px;height:17px;background:#1b1b1b;"><span style="letter-spacing:-0.102px">56.0</span> <span style="margin-left:-0.06px">°C</span></div>
<div class="v" style="left:1054px;top:370px;height:17px;background:#1b1b1b;"><span style="letter-spacing:-0.102px">55.8</span> <span style="margin-left:-0.06px">°C</span></div>
<div class="a ic" style="left:674px;top:387px;width:10px;height:18px"><div style="left:0.10px;top:0.00px;width:9px;height:17px"><svg width="9" height="17" viewBox="0 0 9 17"><path d="M1.900 2.700 a2.600 2.600 0 0 1 5.200 0 V9.300 a4.300 4.300 0 1 1 -5.200 0 Z" fill="url(#gTh)"/><path d="M3.700 3 a0.800 0.800 0 0 1 1.600 0 V4.600 H3.700 Z" fill="#7ab4ea"/><rect x="3.700" y="4.500" width="1.600" height="7.500" fill="#ff5a00"/><circle cx="4.500" cy="12.500" r="2.100" fill="#ff5a00"/></svg></div></div>
<div class="t" style="left:688.6px;top:387px;width:125.4px;height:17px;letter-spacing:-0.218px;word-spacing:0.218px;">ЦП Socket</div>
<div class="v" style="left:814px;top:387px;height:17px;"><span style="letter-spacing:-0.102px">40.5</span> <span style="margin-left:-0.06px">°C</span></div>
<div class="v" style="left:894px;top:387px;height:17px;"><span style="letter-spacing:-0.102px">34.5</span> <span style="margin-left:-0.06px">°C</span></div>
<div class="v" style="left:974px;top:387px;height:17px;"><span style="letter-spacing:-0.102px">50.0</span> <span style="margin-left:-0.06px">°C</span></div>
<div class="v" style="left:1054px;top:387px;height:17px;"><span style="letter-spacing:-0.102px">46.9</span> <span style="margin-left:-0.06px">°C</span></div>
<div style="left:687px;top:404px;width:125px;height:17px;background:#1b1b1b"></div>
<div class="a ic" style="left:674px;top:404px;width:10px;height:18px"><div style="left:0.10px;top:0.00px;width:9px;height:17px"><svg width="9" height="17" viewBox="0 0 9 17"><path d="M1.900 2.700 a2.600 2.600 0 0 1 5.200 0 V9.300 a4.300 4.300 0 1 1 -5.200 0 Z" fill="url(#gTh)"/><path d="M3.700 3 a0.800 0.800 0 0 1 1.600 0 V4.600 H3.700 Z" fill="#7ab4ea"/><rect x="3.700" y="4.500" width="1.600" height="7.500" fill="#ff5a00"/><circle cx="4.500" cy="12.500" r="2.100" fill="#ff5a00"/></svg></div></div>
<div class="t" style="left:688.6px;top:404px;width:125.4px;height:17px;letter-spacing:-1.137px;">T0</div>
<div class="v" style="left:814px;top:404px;height:17px;background:#1b1b1b;"><span style="letter-spacing:-0.102px">18.5</span> <span style="margin-left:-0.06px">°C</span></div>
<div class="v" style="left:894px;top:404px;height:17px;background:#1b1b1b;"><span style="letter-spacing:-0.102px">18.0</span> <span style="margin-left:-0.06px">°C</span></div>
<div class="v" style="left:974px;top:404px;height:17px;background:#1b1b1b;"><span style="letter-spacing:-0.102px">18.5</span> <span style="margin-left:-0.06px">°C</span></div>
<div class="v" style="left:1054px;top:404px;height:17px;background:#1b1b1b;"><span style="letter-spacing:-0.102px">18.1</span> <span style="margin-left:-0.06px">°C</span></div>
<div class="a ic" style="left:674px;top:421px;width:10px;height:18px"><div style="left:0.10px;top:0.00px;width:9px;height:17px"><svg width="9" height="17" viewBox="0 0 9 17"><path d="M1.900 2.700 a2.600 2.600 0 0 1 5.200 0 V9.300 a4.300 4.300 0 1 1 -5.200 0 Z" fill="url(#gTh)"/><path d="M3.700 3 a0.800 0.800 0 0 1 1.600 0 V4.600 H3.700 Z" fill="#7ab4ea"/><rect x="3.700" y="4.500" width="1.600" height="7.500" fill="#ff5a00"/><circle cx="4.500" cy="12.500" r="2.100" fill="#ff5a00"/></svg></div></div>
<div class="t" style="left:688.6px;top:421px;width:125.4px;height:17px;letter-spacing:-0.737px;">T1</div>
<div class="v" style="left:814px;top:421px;height:17px;"><span style="letter-spacing:-0.102px">31.5</span> <span style="margin-left:-0.06px">°C</span></div>
<div class="v" style="left:894px;top:421px;height:17px;"><span style="letter-spacing:-0.102px">31.0</span> <span style="margin-left:-0.06px">°C</span></div>
<div class="v" style="left:974px;top:421px;height:17px;"><span style="letter-spacing:-0.102px">31.5</span> <span style="margin-left:-0.06px">°C</span></div>
<div class="v" style="left:1054px;top:421px;height:17px;"><span style="letter-spacing:-0.102px">31.1</span> <span style="margin-left:-0.06px">°C</span></div>
<div style="left:687px;top:438px;width:125px;height:17px;background:#1b1b1b"></div>
<div class="a ic" style="left:674px;top:438px;width:9px;height:17px"><div style="left:0.80px;top:0.70px;width:8px;height:16px"><svg width="8" height="16" viewBox="0 0 8 16"><path d="M1.800 0.400 L7.200 0.400 L5.100 4.700 L7.300 5.100 L5.700 8.500 L6.900 8.900 L0.900 15.200 L2.800 10.300 L0.400 9.900 L2.300 6.500 L0.100 6.100 Z" fill="url(#gBolt)" stroke="#f28a1c" stroke-width="0.5" stroke-linejoin="round"/><path d="M3.200 1.400 L5.600 1.400 L3.900 5.200 L5.700 5.600 L4.300 8.700 L5.100 9.100 L3.200 11.200 L3.900 9.400 L2 9 L3.600 6 L1.600 5.600 Z" fill="#fffbe0" fill-opacity="0.85"/></svg></div></div>
<div class="t" style="left:688.6px;top:438px;width:125.4px;height:17px;letter-spacing:-0.199px;">+12В</div>
<div class="v" style="left:814px;top:438px;height:17px;background:#1b1b1b;"><span style="letter-spacing:-0.108px">12.144</span> <span style="margin-left:-0.86px">В</span></div>
<div class="v" style="left:894px;top:438px;height:17px;background:#1b1b1b;"><span style="letter-spacing:-0.108px">12.144</span> <span style="margin-left:-0.86px">В</span></div>
<div class="v" style="left:974px;top:438px;height:17px;background:#1b1b1b;"><span style="letter-spacing:-0.108px">12.192</span> <span style="margin-left:-0.86px">В</span></div>
<div class="v" style="left:1054px;top:438px;height:17px;background:#1b1b1b;"><span style="letter-spacing:-0.108px">12.161</span> <span style="margin-left:-0.86px">В</span></div>
<div class="a ic" style="left:674px;top:455px;width:9px;height:17px"><div style="left:0.80px;top:0.70px;width:8px;height:16px"><svg width="8" height="16" viewBox="0 0 8 16"><path d="M1.800 0.400 L7.200 0.400 L5.100 4.700 L7.300 5.100 L5.700 8.500 L6.900 8.900 L0.900 15.200 L2.800 10.300 L0.400 9.900 L2.300 6.500 L0.100 6.100 Z" fill="url(#gBolt)" stroke="#f28a1c" stroke-width="0.5" stroke-linejoin="round"/><path d="M3.200 1.400 L5.600 1.400 L3.900 5.200 L5.700 5.600 L4.300 8.700 L5.100 9.100 L3.200 11.200 L3.900 9.400 L2 9 L3.600 6 L1.600 5.600 Z" fill="#fffbe0" fill-opacity="0.85"/></svg></div></div>
<div class="t" style="left:688.6px;top:455px;width:125.4px;height:17px;letter-spacing:-0.190px;">+5В</div>
<div class="v" style="left:814px;top:455px;height:17px;"><span style="letter-spacing:-0.105px">5.010</span> <span style="margin-left:-0.86px">В</span></div>
<div class="v" style="left:894px;top:455px;height:17px;"><span style="letter-spacing:-0.105px">5.000</span> <span style="margin-left:-0.86px">В</span></div>
<div class="v" style="left:974px;top:455px;height:17px;"><span style="letter-spacing:-0.105px">5.020</span> <span style="margin-left:-0.86px">В</span></div>
<div class="v" style="left:1054px;top:455px;height:17px;"><span style="letter-spacing:-0.105px">5.006</span> <span style="margin-left:-0.86px">В</span></div>
<div style="left:687px;top:472px;width:125px;height:17px;background:#1b1b1b"></div>
<div class="a ic" style="left:674px;top:472px;width:9px;height:17px"><div style="left:0.80px;top:0.70px;width:8px;height:16px"><svg width="8" height="16" viewBox="0 0 8 16"><path d="M1.800 0.400 L7.200 0.400 L5.100 4.700 L7.300 5.100 L5.700 8.500 L6.900 8.900 L0.900 15.200 L2.800 10.300 L0.400 9.900 L2.300 6.500 L0.100 6.100 Z" fill="url(#gBolt)" stroke="#f28a1c" stroke-width="0.5" stroke-linejoin="round"/><path d="M3.200 1.400 L5.600 1.400 L3.900 5.200 L5.700 5.600 L4.300 8.700 L5.100 9.100 L3.200 11.200 L3.900 9.400 L2 9 L3.600 6 L1.600 5.600 Z" fill="#fffbe0" fill-opacity="0.85"/></svg></div></div>
<div class="t" style="left:688.6px;top:472px;width:125.4px;height:17px;color:#1fe01f;letter-spacing:-0.434px;">Vcore</div>
<div class="v" style="left:814px;top:472px;height:17px;background:#1b1b1b;color:#1fe01f;"><span style="letter-spacing:-0.105px">1.200</span> <span style="margin-left:-0.86px">В</span></div>
<div class="v" style="left:894px;top:472px;height:17px;background:#1b1b1b;color:#1fe01f;"><span style="letter-spacing:-0.105px">1.200</span> <span style="margin-left:-0.86px">В</span></div>
<div class="v" style="left:974px;top:472px;height:17px;background:#1b1b1b;color:#1fe01f;"><span style="letter-spacing:-0.105px">1.212</span> <span style="margin-left:-0.86px">В</span></div>
<div class="v" style="left:1054px;top:472px;height:17px;background:#1b1b1b;color:#1fe01f;"><span style="letter-spacing:-0.105px">1.208</span> <span style="margin-left:-0.86px">В</span></div>
<div class="a ic" style="left:674px;top:489px;width:9px;height:17px"><div style="left:0.80px;top:0.70px;width:8px;height:16px"><svg width="8" height="16" viewBox="0 0 8 16"><path d="M1.800 0.400 L7.200 0.400 L5.100 4.700 L7.300 5.100 L5.700 8.500 L6.900 8.900 L0.900 15.200 L2.800 10.300 L0.400 9.900 L2.300 6.500 L0.100 6.100 Z" fill="url(#gBolt)" stroke="#f28a1c" stroke-width="0.5" stroke-linejoin="round"/><path d="M3.200 1.400 L5.600 1.400 L3.900 5.200 L5.700 5.600 L4.300 8.700 L5.100 9.100 L3.200 11.200 L3.900 9.400 L2 9 L3.600 6 L1.600 5.600 Z" fill="#fffbe0" fill-opacity="0.85"/></svg></div></div>
<div class="t" style="left:688.6px;top:489px;width:125.4px;height:17px;letter-spacing:-0.218px;">VIN3</div>
<div class="v" style="left:814px;top:489px;height:17px;"><span style="letter-spacing:-0.105px">1.204</span> <span style="margin-left:-0.86px">В</span></div>
<div class="v" style="left:894px;top:489px;height:17px;"><span style="letter-spacing:-0.105px">1.202</span> <span style="margin-left:-0.86px">В</span></div>
<div class="v" style="left:974px;top:489px;height:17px;"><span style="letter-spacing:-0.105px">1.242</span> <span style="margin-left:-0.86px">В</span></div>
<div class="v" style="left:1054px;top:489px;height:17px;"><span style="letter-spacing:-0.105px">1.236</span> <span style="margin-left:-0.86px">В</span></div>
<div style="left:687px;top:506px;width:125px;height:17px;background:#1b1b1b"></div>
<div class="a ic" style="left:674px;top:506px;width:9px;height:17px"><div style="left:0.80px;top:0.70px;width:8px;height:16px"><svg width="8" height="16" viewBox="0 0 8 16"><path d="M1.800 0.400 L7.200 0.400 L5.100 4.700 L7.300 5.100 L5.700 8.500 L6.900 8.900 L0.900 15.200 L2.800 10.300 L0.400 9.900 L2.300 6.500 L0.100 6.100 Z" fill="url(#gBolt)" stroke="#f28a1c" stroke-width="0.5" stroke-linejoin="round"/><path d="M3.200 1.400 L5.600 1.400 L3.900 5.200 L5.700 5.600 L4.300 8.700 L5.100 9.100 L3.200 11.200 L3.900 9.400 L2 9 L3.600 6 L1.600 5.600 Z" fill="#fffbe0" fill-opacity="0.85"/></svg></div></div>
<div class="t" style="left:688.6px;top:506px;width:125.4px;height:17px;letter-spacing:-0.729px;word-spacing:0.729px;">ЦП VDD2</div>
<div class="v" style="left:814px;top:506px;height:17px;background:#1b1b1b;"><span style="letter-spacing:-0.105px">1.304</span> <span style="margin-left:-0.86px">В</span></div>
<div class="v" style="left:894px;top:506px;height:17px;background:#1b1b1b;"><span style="letter-spacing:-0.105px">1.304</span> <span style="margin-left:-0.86px">В</span></div>
<div class="v" style="left:974px;top:506px;height:17px;background:#1b1b1b;"><span style="letter-spacing:-0.105px">1.308</span> <span style="margin-left:-0.86px">В</span></div>
<div class="v" style="left:1054px;top:506px;height:17px;background:#1b1b1b;"><span style="letter-spacing:-0.105px">1.307</span> <span style="margin-left:-0.86px">В</span></div>
<div class="a ic" style="left:674px;top:523px;width:9px;height:17px"><div style="left:0.80px;top:0.70px;width:8px;height:16px"><svg width="8" height="16" viewBox="0 0 8 16"><path d="M1.800 0.400 L7.200 0.400 L5.100 4.700 L7.300 5.100 L5.700 8.500 L6.900 8.900 L0.900 15.200 L2.800 10.300 L0.400 9.900 L2.300 6.500 L0.100 6.100 Z" fill="url(#gBolt)" stroke="#f28a1c" stroke-width="0.5" stroke-linejoin="round"/><path d="M3.200 1.400 L5.600 1.400 L3.900 5.200 L5.700 5.600 L4.300 8.700 L5.100 9.100 L3.200 11.200 L3.900 9.400 L2 9 L3.600 6 L1.600 5.600 Z" fill="#fffbe0" fill-opacity="0.85"/></svg></div></div>
<div class="t" style="left:688.6px;top:523px;width:125.4px;height:17px;letter-spacing:-0.825px;word-spacing:0.825px;">ЦП SA</div>
<div class="v" style="left:814px;top:523px;height:17px;background:#121e37;"><span style="letter-spacing:-0.105px">1.142</span> <span style="margin-left:-0.86px">В</span></div>
<div class="v" style="left:894px;top:523px;height:17px;"><span style="letter-spacing:-0.105px">1.142</span> <span style="margin-left:-0.86px">В</span></div>
<div class="v" style="left:974px;top:523px;height:17px;"><span style="letter-spacing:-0.105px">1.156</span> <span style="margin-left:-0.86px">В</span></div>
<div class="v" style="left:1054px;top:523px;height:17px;"><span style="letter-spacing:-0.105px">1.152</span> <span style="margin-left:-0.86px">В</span></div>
<div style="left:687px;top:540px;width:125px;height:17px;background:#1b1b1b"></div>
<div class="a ic" style="left:674px;top:540px;width:9px;height:17px"><div style="left:0.80px;top:0.70px;width:8px;height:16px"><svg width="8" height="16" viewBox="0 0 8 16"><path d="M1.800 0.400 L7.200 0.400 L5.100 4.700 L7.300 5.100 L5.700 8.500 L6.900 8.900 L0.900 15.200 L2.800 10.300 L0.400 9.900 L2.300 6.500 L0.100 6.100 Z" fill="url(#gBolt)" stroke="#f28a1c" stroke-width="0.5" stroke-linejoin="round"/><path d="M3.200 1.400 L5.600 1.400 L3.900 5.200 L5.700 5.600 L4.300 8.700 L5.100 9.100 L3.200 11.200 L3.900 9.400 L2 9 L3.600 6 L1.600 5.600 Z" fill="#fffbe0" fill-opacity="0.85"/></svg></div></div>
<div class="t" style="left:688.6px;top:540px;width:125.4px;height:17px;letter-spacing:-0.830px;word-spacing:0.830px;">ЦП AUX</div>
<div class="v" style="left:814px;top:540px;height:17px;background:#1b1b1b;"><span style="letter-spacing:-0.105px">1.804</span> <span style="margin-left:-0.86px">В</span></div>
<div class="v" style="left:894px;top:540px;height:17px;background:#1b1b1b;"><span style="letter-spacing:-0.105px">1.800</span> <span style="margin-left:-0.86px">В</span></div>
<div class="v" style="left:974px;top:540px;height:17px;background:#1b1b1b;"><span style="letter-spacing:-0.105px">1.820</span> <span style="margin-left:-0.86px">В</span></div>
<div class="v" style="left:1054px;top:540px;height:17px;background:#1b1b1b;"><span style="letter-spacing:-0.105px">1.818</span> <span style="margin-left:-0.86px">В</span></div>
<div class="a ic" style="left:674px;top:557px;width:9px;height:17px"><div style="left:0.80px;top:0.70px;width:8px;height:16px"><svg width="8" height="16" viewBox="0 0 8 16"><path d="M1.800 0.400 L7.200 0.400 L5.100 4.700 L7.300 5.100 L5.700 8.500 L6.900 8.900 L0.900 15.200 L2.800 10.300 L0.400 9.900 L2.300 6.500 L0.100 6.100 Z" fill="url(#gBolt)" stroke="#f28a1c" stroke-width="0.5" stroke-linejoin="round"/><path d="M3.200 1.400 L5.600 1.400 L3.900 5.200 L5.700 5.600 L4.300 8.700 L5.100 9.100 L3.200 11.200 L3.900 9.400 L2 9 L3.600 6 L1.600 5.600 Z" fill="#fffbe0" fill-opacity="0.85"/></svg></div></div>
<div class="t" style="left:688.6px;top:557px;width:125.4px;height:17px;letter-spacing:-0.218px;">VIN7</div>
<div class="v" style="left:814px;top:557px;height:17px;background:#121e37;"><span style="letter-spacing:-0.105px">1.532</span> <span style="margin-left:-0.86px">В</span></div>
<div class="v" style="left:894px;top:557px;height:17px;"><span style="letter-spacing:-0.105px">1.520</span> <span style="margin-left:-0.86px">В</span></div>
<div class="v" style="left:974px;top:557px;height:17px;"><span style="letter-spacing:-0.105px">1.534</span> <span style="margin-left:-0.86px">В</span></div>
<div class="v" style="left:1054px;top:557px;height:17px;"><span style="letter-spacing:-0.105px">1.526</span> <span style="margin-left:-0.86px">В</span></div>
<div style="left:687px;top:574px;width:125px;height:17px;background:#1b1b1b"></div>
<div class="a ic" style="left:674px;top:574px;width:9px;height:17px"><div style="left:0.80px;top:0.70px;width:8px;height:16px"><svg width="8" height="16" viewBox="0 0 8 16"><path d="M1.800 0.400 L7.200 0.400 L5.100 4.700 L7.300 5.100 L5.700 8.500 L6.900 8.900 L0.900 15.200 L2.800 10.300 L0.400 9.900 L2.300 6.500 L0.100 6.100 Z" fill="url(#gBolt)" stroke="#f28a1c" stroke-width="0.5" stroke-linejoin="round"/><path d="M3.200 1.400 L5.600 1.400 L3.900 5.200 L5.700 5.600 L4.300 8.700 L5.100 9.100 L3.200 11.200 L3.900 9.400 L2 9 L3.600 6 L1.600 5.600 Z" fill="#fffbe0" fill-opacity="0.85"/></svg></div></div>
<div class="t" style="left:688.6px;top:574px;width:125.4px;height:17px;letter-spacing:0.062px;">+3,3В</div>
<div class="v" style="left:814px;top:574px;height:17px;background:#14213b;"><span style="letter-spacing:-0.105px">3.284</span> <span style="margin-left:-0.86px">В</span></div>
<div class="v" style="left:894px;top:574px;height:17px;background:#1b1b1b;"><span style="letter-spacing:-0.105px">3.280</span> <span style="margin-left:-0.86px">В</span></div>
<div class="v" style="left:974px;top:574px;height:17px;background:#1b1b1b;"><span style="letter-spacing:-0.105px">3.292</span> <span style="margin-left:-0.86px">В</span></div>
<div class="v" style="left:1054px;top:574px;height:17px;background:#1b1b1b;"><span style="letter-spacing:-0.105px">3.285</span> <span style="margin-left:-0.86px">В</span></div>
<div class="a ic" style="left:673px;top:593px;width:13px;height:13px"><div style="left:0.20px;top:0.10px;width:12px;height:12px"><svg width="12" height="12" viewBox="0 0 12 12"><rect x="0.3" y="0.3" width="11.400" height="11.400" fill="#484848" stroke="#6c6c6c" stroke-width="0.6"/><path d="M6 1.300V4M6 8V10.700M1.300 6H4M8 6H10.700M2.700 2.700L4.600 4.600M7.400 7.400L9.300 9.300M9.300 2.700L7.400 4.600M4.600 7.400L2.700 9.300" stroke="#d6d6d6" stroke-width="1"/><circle cx="6" cy="6" r="1.700" fill="#f2dcdc"/></svg></div></div>
<div class="t" style="left:688.6px;top:591px;width:125.4px;height:17px;color:#f2f26c;letter-spacing:0.030px;word-spacing:-0.030px;">ЦП Кулер</div>
<div class="v" style="left:814px;top:591px;height:17px;background:#121e37;color:#f2f26c;"><span style="letter-spacing:-0.118px">708</span> <span style="transform:scaleX(0.87);transform-origin:100% 50%;margin-left:-3.93px">RPM</span></div>
<div class="v" style="left:894px;top:591px;height:17px;color:#f2f26c;"><span style="letter-spacing:-0.118px">692</span> <span style="transform:scaleX(0.87);transform-origin:100% 50%;margin-left:-3.93px">RPM</span></div>
<div class="v" style="left:974px;top:591px;height:17px;color:#f2f26c;"><span style="letter-spacing:-0.105px">1,926</span> <span style="transform:scaleX(0.87);transform-origin:100% 50%;margin-left:-3.93px">RPM</span></div>
<div class="v" style="left:1054px;top:591px;height:17px;color:#f2f26c;"><span style="letter-spacing:-0.105px">1,759</span> <span style="transform:scaleX(0.87);transform-origin:100% 50%;margin-left:-3.93px">RPM</span></div>
<div style="left:687px;top:608px;width:125px;height:17px;background:#1b1b1b"></div>
<div class="a ic" style="left:673px;top:610px;width:13px;height:13px"><div style="left:0.20px;top:0.10px;width:12px;height:12px"><svg width="12" height="12" viewBox="0 0 12 12"><rect x="0.3" y="0.3" width="11.400" height="11.400" fill="#484848" stroke="#6c6c6c" stroke-width="0.6"/><path d="M6 1.300V4M6 8V10.700M1.300 6H4M8 6H10.700M2.700 2.700L4.600 4.600M7.400 7.400L9.300 9.300M9.300 2.700L7.400 4.600M4.600 7.400L2.700 9.300" stroke="#d6d6d6" stroke-width="1"/><circle cx="6" cy="6" r="1.700" fill="#f2dcdc"/></svg></div></div>
<div class="t" style="left:688.6px;top:608px;width:125.4px;height:17px;color:#f2f26c;letter-spacing:-0.211px;word-spacing:0.211px;">Система 3</div>
<div class="v" style="left:814px;top:608px;height:17px;background:#14213b;color:#f2f26c;"><span style="letter-spacing:-0.105px">1,246</span> <span style="transform:scaleX(0.87);transform-origin:100% 50%;margin-left:-3.93px">RPM</span></div>
<div class="v" style="left:894px;top:608px;height:17px;background:#1b1b1b;color:#f2f26c;"><span style="letter-spacing:-0.118px">0</span> <span style="transform:scaleX(0.87);transform-origin:100% 50%;margin-left:-3.93px">RPM</span></div>
<div class="v" style="left:974px;top:608px;height:17px;background:#1b1b1b;color:#f2f26c;"><span style="letter-spacing:-0.105px">1,257</span> <span style="transform:scaleX(0.87);transform-origin:100% 50%;margin-left:-3.93px">RPM</span></div>
<div class="v" style="left:1054px;top:608px;height:17px;background:#1b1b1b;color:#f2f26c;"><span style="letter-spacing:-0.105px">1,140</span> <span style="transform:scaleX(0.87);transform-origin:100% 50%;margin-left:-3.93px">RPM</span></div>
<div class="v" style="left:814px;top:625px;height:17px;"></div>
<div class="v" style="left:894px;top:625px;height:17px;"></div>
<div class="v" style="left:974px;top:625px;height:17px;"></div>
<div class="v" style="left:1054px;top:625px;height:17px;"></div>
<div style="left:687px;top:642px;width:125px;height:17px;background:#242424"></div>
<svg class="a" style="left:655px;top:645px" width="11" height="11" viewBox="0 0 11 11"><path transform="translate(0.55 0.50)" d="M0.900 2.300 L5 6.400 L9.100 2.300" fill="none" stroke="#ababab" stroke-width="1.7"/></svg>
<div class="a ic" style="left:673px;top:642px;width:13px;height:15px"><div style="left:0.20px;top:0.80px;width:12px;height:14px"><svg width="12" height="14" viewBox="0 0 12 14"><rect x="2.1" y="0.2" width="7.800" height="13.600" rx="1.4" fill="url(#gChip)"/><path d="M0.500 2.900h1.300M0.500 5.600h1.300M0.500 8.300h1.300M0.500 11h1.300M10.200 2.900h1.300M10.200 5.600h1.300M10.200 8.300h1.300M10.200 11h1.300" stroke="#c4c4c4" stroke-width="1.2"/></svg></div></div>
<div class="t" style="left:689.2px;top:642px;width:124.8px;height:17px;font-style:italic;letter-spacing:-0.080px;word-spacing:0.080px;">DDR5 DIMM [#1] (BAN...</div>
<div class="v" style="left:814px;top:642px;height:17px;background:#242424;"></div>
<div class="v" style="left:894px;top:642px;height:17px;background:#242424;"></div>
<div class="v" style="left:974px;top:642px;height:17px;background:#242424;"></div>
<div class="v" style="left:1054px;top:642px;height:17px;background:#242424;"></div>
<div class="a ic" style="left:674px;top:659px;width:10px;height:18px"><div style="left:0.10px;top:0.00px;width:9px;height:17px"><svg width="9" height="17" viewBox="0 0 9 17"><path d="M1.900 2.700 a2.600 2.600 0 0 1 5.200 0 V9.300 a4.300 4.300 0 1 1 -5.200 0 Z" fill="url(#gTh)"/><path d="M3.700 3 a0.800 0.800 0 0 1 1.600 0 V4.600 H3.700 Z" fill="#7ab4ea"/><rect x="3.700" y="4.500" width="1.600" height="7.500" fill="#ff5a00"/><circle cx="4.500" cy="12.500" r="2.100" fill="#ff5a00"/></svg></div></div>
<div class="t" style="left:688.6px;top:659px;width:125.4px;height:17px;letter-spacing:-0.321px;word-spacing:0.321px;">SPD Hub Температура</div>
<div class="v" style="left:814px;top:659px;height:17px;"><span style="letter-spacing:-0.102px">41.5</span> <span style="margin-left:-0.06px">°C</span></div>
<div class="v" style="left:894px;top:659px;height:17px;"><span style="letter-spacing:-0.102px">33.8</span> <span style="margin-left:-0.06px">°C</span></div>
<div class="v" style="left:974px;top:659px;height:17px;"><span style="letter-spacing:-0.102px">43.5</span> <span style="margin-left:-0.06px">°C</span></div>
<div class="v" style="left:1054px;top:659px;height:17px;"><span style="letter-spacing:-0.102px">41.1</span> <span style="margin-left:-0.06px">°C</span></div>
<div style="left:687px;top:676px;width:125px;height:17px;background:#1b1b1b"></div>
<div class="a ic" style="left:674px;top:676px;width:9px;height:17px"><div style="left:0.80px;top:0.70px;width:8px;height:16px"><svg width="8" height="16" viewBox="0 0 8 16"><path d="M1.800 0.400 L7.200 0.400 L5.100 4.700 L7.300 5.100 L5.700 8.500 L6.900 8.900 L0.900 15.200 L2.800 10.300 L0.400 9.900 L2.300 6.500 L0.100 6.100 Z" fill="url(#gBolt)" stroke="#f28a1c" stroke-width="0.5" stroke-linejoin="round"/><path d="M3.200 1.400 L5.600 1.400 L3.900 5.200 L5.700 5.600 L4.300 8.700 L5.100 9.100 L3.200 11.200 L3.900 9.400 L2 9 L3.600 6 L1.600 5.600 Z" fill="#fffbe0" fill-opacity="0.85"/></svg></div></div>
<div class="t" style="left:688.6px;top:676px;width:125.4px;height:17px;color:#f06a6a;letter-spacing:-0.294px;word-spacing:0.294px;">VDD (SWA) Напряжение</div>
<div class="v" style="left:814px;top:676px;height:17px;background:#14213b;color:#f06a6a;"><span style="letter-spacing:-0.105px">1.350</span> <span style="margin-left:-0.86px">В</span></div>
<div class="v" style="left:894px;top:676px;height:17px;background:#1b1b1b;color:#f06a6a;"><span style="letter-spacing:-0.105px">1.215</span> <span style="margin-left:-0.86px">В</span></div>
<div class="v" style="left:974px;top:676px;height:17px;background:#1b1b1b;color:#f06a6a;"><span style="letter-spacing:-0.105px">1.365</span> <span style="margin-left:-0.86px">В</span></div>
<div class="v" style="left:1054px;top:676px;height:17px;background:#1b1b1b;color:#f06a6a;"><span style="letter-spacing:-0.105px">1.349</span> <span style="margin-left:-0.86px">В</span></div>
<div class="a ic" style="left:674px;top:693px;width:9px;height:17px"><div style="left:0.80px;top:0.70px;width:8px;height:16px"><svg width="8" height="16" viewBox="0 0 8 16"><path d="M1.800 0.400 L7.200 0.400 L5.100 4.700 L7.300 5.100 L5.700 8.500 L6.900 8.900 L0.900 15.200 L2.800 10.300 L0.400 9.900 L2.300 6.500 L0.100 6.100 Z" fill="url(#gBolt)" stroke="#f28a1c" stroke-width="0.5" stroke-linejoin="round"/><path d="M3.200 1.400 L5.600 1.400 L3.900 5.200 L5.700 5.600 L4.300 8.700 L5.100 9.100 L3.200 11.200 L3.900 9.400 L2 9 L3.600 6 L1.600 5.600 Z" fill="#fffbe0" fill-opacity="0.85"/></svg></div></div>
<div class="t" style="left:688.6px;top:693px;width:125.4px;height:17px;color:#f06a6a;letter-spacing:-0.238px;word-spacing:0.238px;">VDDQ (SWB) Напряже...</div>
<div class="v" style="left:814px;top:693px;height:17px;color:#f06a6a;"><span style="letter-spacing:-0.105px">1.320</span> <span style="margin-left:-0.86px">В</span></div>
<div class="v" style="left:894px;top:693px;height:17px;color:#f06a6a;"><span style="letter-spacing:-0.105px">1.305</span> <span style="margin-left:-0.86px">В</span></div>
<div class="v" style="left:974px;top:693px;height:17px;color:#f06a6a;"><span style="letter-spacing:-0.105px">1.335</span> <span style="margin-left:-0.86px">В</span></div>
<div class="v" style="left:1054px;top:693px;height:17px;color:#f06a6a;"><span style="letter-spacing:-0.105px">1.307</span> <span style="margin-left:-0.86px">В</span></div>
<div style="left:687px;top:710px;width:125px;height:17px;background:#1b1b1b"></div>
<div class="a ic" style="left:674px;top:710px;width:9px;height:17px"><div style="left:0.80px;top:0.70px;width:8px;height:16px"><svg width="8" height="16" viewBox="0 0 8 16"><path d="M1.800 0.400 L7.200 0.400 L5.100 4.700 L7.300 5.100 L5.700 8.500 L6.900 8.900 L0.900 15.200 L2.800 10.300 L0.400 9.900 L2.300 6.500 L0.100 6.100 Z" fill="url(#gBolt)" stroke="#f28a1c" stroke-width="0.5" stroke-linejoin="round"/><path d="M3.200 1.400 L5.600 1.400 L3.900 5.200 L5.700 5.600 L4.300 8.700 L5.100 9.100 L3.200 11.200 L3.900 9.400 L2 9 L3.600 6 L1.600 5.600 Z" fill="#fffbe0" fill-opacity="0.85"/></svg></div></div>
<div class="t" style="left:688.6px;top:710px;width:125.4px;height:17px;letter-spacing:-0.365px;word-spacing:0.365px;">VPP (SWC) Напряжение</div>
<div class="v" style="left:814px;top:710px;height:17px;background:#1b1b1b;"><span style="letter-spacing:-0.105px">1.815</span> <span style="margin-left:-0.86px">В</span></div>
<div class="v" style="left:894px;top:710px;height:17px;background:#1b1b1b;"><span style="letter-spacing:-0.105px">1.680</span> <span style="margin-left:-0.86px">В</span></div>
<div class="v" style="left:974px;top:710px;height:17px;background:#1b1b1b;"><span style="letter-spacing:-0.105px">1.830</span> <span style="margin-left:-0.86px">В</span></div>
<div class="v" style="left:1054px;top:710px;height:17px;background:#1b1b1b;"><span style="letter-spacing:-0.105px">1.814</span> <span style="margin-left:-0.86px">В</span></div>
<div class="a ic" style="left:674px;top:727px;width:9px;height:17px"><div style="left:0.80px;top:0.70px;width:8px;height:16px"><svg width="8" height="16" viewBox="0 0 8 16"><path d="M1.800 0.400 L7.200 0.400 L5.100 4.700 L7.300 5.100 L5.700 8.500 L6.900 8.900 L0.900 15.200 L2.800 10.300 L0.400 9.900 L2.300 6.500 L0.100 6.100 Z" fill="url(#gBolt)" stroke="#f28a1c" stroke-width="0.5" stroke-linejoin="round"/><path d="M3.200 1.400 L5.600 1.400 L3.900 5.200 L5.700 5.600 L4.300 8.700 L5.100 9.100 L3.200 11.200 L3.900 9.400 L2 9 L3.600 6 L1.600 5.600 Z" fill="#fffbe0" fill-opacity="0.85"/></svg></div></div>
<div class="t" style="left:688.6px;top:727px;width:125.4px;height:17px;letter-spacing:-0.174px;word-spacing:0.174px;">1,8В Напряжение</div>
<div class="v" style="left:814px;top:727px;height:17px;"><span style="letter-spacing:-0.105px">1.815</span> <span style="margin-left:-0.86px">В</span></div>
<div class="v" style="left:894px;top:727px;height:17px;"><span style="letter-spacing:-0.105px">1.800</span> <span style="margin-left:-0.86px">В</span></div>
<div class="v" style="left:974px;top:727px;height:17px;"><span style="letter-spacing:-0.105px">1.815</span> <span style="margin-left:-0.86px">В</span></div>
<div class="v" style="left:1054px;top:727px;height:17px;"><span style="letter-spacing:-0.105px">1.814</span> <span style="margin-left:-0.86px">В</span></div>
<div style="left:687px;top:744px;width:125px;height:17px;background:#1b1b1b"></div>
<div class="a ic" style="left:674px;top:744px;width:9px;height:17px"><div style="left:0.80px;top:0.70px;width:8px;height:16px"><svg width="8" height="16" viewBox="0 0 8 16"><path d="M1.800 0.400 L7.200 0.400 L5.100 4.700 L7.300 5.100 L5.700 8.500 L6.900 8.900 L0.900 15.200 L2.800 10.300 L0.400 9.900 L2.300 6.500 L0.100 6.100 Z" fill="url(#gBolt)" stroke="#f28a1c" stroke-width="0.5" stroke-linejoin="round"/><path d="M3.200 1.400 L5.600 1.400 L3.900 5.200 L5.700 5.600 L4.300 8.700 L5.100 9.100 L3.200 11.200 L3.900 9.400 L2 9 L3.600 6 L1.600 5.600 Z" fill="#fffbe0" fill-opacity="0.85"/></svg></div></div>
<div class="t" style="left:688.6px;top:744px;width:125.4px;height:17px;letter-spacing:-0.322px;word-spacing:0.322px;">1.0V VOUT Напряжение</div>
<div class="v" style="left:814px;top:744px;height:17px;background:#1b1b1b;"><span style="letter-spacing:-0.105px">1.020</span> <span style="margin-left:-0.86px">В</span></div>
<div class="v" style="left:894px;top:744px;height:17px;background:#1b1b1b;"><span style="letter-spacing:-0.105px">0.975</span> <span style="margin-left:-0.86px">В</span></div>
<div class="v" style="left:974px;top:744px;height:17px;background:#1b1b1b;"><span style="letter-spacing:-0.105px">1.020</span> <span style="margin-left:-0.86px">В</span></div>
<div class="v" style="left:1054px;top:744px;height:17px;background:#1b1b1b;"><span style="letter-spacing:-0.105px">1.009</span> <span style="margin-left:-0.86px">В</span></div>
<div class="a ic" style="left:674px;top:761px;width:9px;height:17px"><div style="left:0.80px;top:0.70px;width:8px;height:16px"><svg width="8" height="16" viewBox="0 0 8 16"><path d="M1.800 0.400 L7.200 0.400 L5.100 4.700 L7.300 5.100 L5.700 8.500 L6.900 8.900 L0.900 15.200 L2.800 10.300 L0.400 9.900 L2.300 6.500 L0.100 6.100 Z" fill="url(#gBolt)" stroke="#f28a1c" stroke-width="0.5" stroke-linejoin="round"/><path d="M3.200 1.400 L5.600 1.400 L3.900 5.200 L5.700 5.600 L4.300 8.700 L5.100 9.100 L3.200 11.200 L3.900 9.400 L2 9 L3.600 6 L1.600 5.600 Z" fill="#fffbe0" fill-opacity="0.85"/></svg></div></div>
<div class="t" style="left:688.6px;top:761px;width:125.4px;height:17px;letter-spacing:-0.181px;word-spacing:0.181px;">VIN Напряжение</div>
<div class="v" style="left:814px;top:761px;height:17px;"><span style="letter-spacing:-0.105px">5.040</span> <span style="margin-left:-0.86px">В</span></div>
<div class="v" style="left:894px;top:761px;height:17px;"><span style="letter-spacing:-0.105px">4.410</span> <span style="margin-left:-0.86px">В</span></div>
<div class="v" style="left:974px;top:761px;height:17px;"><span style="letter-spacing:-0.105px">5.040</span> <span style="margin-left:-0.86px">В</span></div>
<div class="v" style="left:1054px;top:761px;height:17px;"><span style="letter-spacing:-0.105px">4.895</span> <span style="margin-left:-0.86px">В</span></div>
<div style="left:687px;top:778px;width:125px;height:8px;background:#1b1b1b"></div>
<div class="a ic" style="left:674px;top:778px;width:9px;height:17px"><div style="left:0.80px;top:0.70px;width:8px;height:16px"><svg width="8" height="16" viewBox="0 0 8 16"><path d="M1.800 0.400 L7.200 0.400 L5.100 4.700 L7.300 5.100 L5.700 8.500 L6.900 8.900 L0.900 15.200 L2.800 10.300 L0.400 9.900 L2.300 6.500 L0.100 6.100 Z" fill="url(#gBolt)" stroke="#f28a1c" stroke-width="0.5" stroke-linejoin="round"/><path d="M3.200 1.400 L5.600 1.400 L3.900 5.200 L5.700 5.600 L4.300 8.700 L5.100 9.100 L3.200 11.200 L3.900 9.400 L2 9 L3.600 6 L1.600 5.600 Z" fill="#fffbe0" fill-opacity="0.85"/></svg></div></div>
<div class="t" style="left:688.6px;top:778px;width:125.4px;height:8px;letter-spacing:-0.436px;word-spacing:0.436px;">Общая мощность</div>
<div class="v" style="left:814px;top:778px;height:8px;background:#14213b;"><span style="letter-spacing:-0.105px">0.625</span> <span style="margin-left:-0.06px">W</span></div>
<div class="v" style="left:894px;top:778px;height:8px;background:#1b1b1b;"><span style="letter-spacing:-0.105px">0.500</span> <span style="margin-left:-0.06px">W</span></div>
<div class="v" style="left:974px;top:778px;height:8px;background:#1b1b1b;"><span style="letter-spacing:-0.105px">4.125</span> <span style="margin-left:-0.06px">W</span></div>
<div class="v" style="left:1054px;top:778px;height:8px;background:#1b1b1b;"><span style="letter-spacing:-0.105px">2.330</span> <span style="margin-left:-0.06px">W</span></div>
<div style="left:812px;top:200px;width:1px;height:586px;background:#0b1626"></div>
<div style="left:892px;top:200px;width:1px;height:586px;background:#0b1626"></div>
<div style="left:972px;top:200px;width:1px;height:586px;background:#0b1626"></div>
<div style="left:1052px;top:200px;width:1px;height:586px;background:#0b1626"></div>
<div style="left:1132px;top:200px;width:1px;height:586px;background:#0b1626"></div>
</div>
<div style="left:7px;top:786px;width:1280px;height:1px;background:#3c3c3c"></div>
<div class="a" style="left:9.3px;top:794px;width:40px;height:33px;border:1px solid #8e8e8e;border-radius:4.500px"><svg width="40" height="33" viewBox="0 0 40 33"><path d="M3.800 17.300 L11.500 8.800 V13.600 H18.800 V21 H11.500 V25.800 Z M35.800 17.300 L28.100 8.800 V13.600 H20.800 V21 H28.100 V25.800 Z" fill="#3f97e4" stroke="#bcd9f5" stroke-width="0.6"/></svg></div>
<div class="a" style="left:53px;top:794px;width:40px;height:33px;border:1px solid #8e8e8e;border-radius:4.500px"><svg width="40" height="33" viewBox="0 0 40 33"><path d="M19.400 17.300 L11.700 8.800 V13.600 H4.700 V21 H11.700 V25.800 Z M20.200 17.300 L27.900 8.800 V13.600 H34.500 V21 H27.900 V25.800 Z" fill="#3f97e4" stroke="#bcd9f5" stroke-width="0.6"/></svg></div>
<div class="a" style="left:931px;top:794px;width:40px;height:33px;border:1px solid #8e8e8e;border-radius:4.500px"><svg width="40" height="33" viewBox="0 0 40 33"><defs><linearGradient id="m1" x1="0" y1="0" x2="1" y2="0"><stop offset="0" stop-color="#0a20d8"/><stop offset="0.45" stop-color="#1030e0"/><stop offset="0.5" stop-color="#dfe6ff"/><stop offset="1" stop-color="#5f7ef0"/></linearGradient></defs><ellipse cx="21" cy="29" rx="8" ry="3" fill="#d8d8d8"/><path d="M10 3 L34 6 L31 27 L8 23 Z" fill="#d9d9d9"/><path d="M11.5 4.5 L32.5 7.2 L30 24.5 L9.8 21.5 Z" fill="url(#m1)"/><circle cx="13" cy="18" r="6.3" fill="#aebfe8" fill-opacity="0.85" stroke="#dfe6f2" stroke-width="1.2"/><path d="M17.5 23 L24 31" stroke="#b87a3a" stroke-width="2.6"/></svg></div>
<div class="a" style="left:983px;top:794px;width:40px;height:33px;border:1px solid #8e8e8e;border-radius:4.500px"><svg width="40" height="33" viewBox="0 0 40 33"><defs><linearGradient id="m2" x1="0" y1="0" x2="1" y2="1"><stop offset="0" stop-color="#7fd0ff"/><stop offset="0.5" stop-color="#2a90e0"/><stop offset="1" stop-color="#1060c0"/></linearGradient></defs><path d="M20 10 H29 V17" fill="none" stroke="#8a8a8a" stroke-width="1.2"/><ellipse cx="13" cy="18" rx="5" ry="2" fill="#c8c8c8"/><path d="M6 3 L20 5 L18 15 L5 13 Z" fill="url(#m2)" stroke="#3a6a9a" stroke-width="0.6"/><ellipse cx="27" cy="31" rx="5" ry="2" fill="#c8c8c8"/><path d="M21 16 L35 18 L33 28 L20 26 Z" fill="url(#m2)" stroke="#3a6a9a" stroke-width="0.6"/></svg></div>
<div class="a" style="left:1050.5px;top:802px;height:17px;line-height:17px;font-size:11px;color:#fff;white-space:nowrap;letter-spacing:0.2px">0:13:54</div>
<div class="a" style="left:1094px;top:794px;width:40px;height:33px;border:1px solid #8e8e8e;border-radius:4.500px"><svg width="40" height="33" viewBox="0 0 40 33"><circle cx="20" cy="17" r="14.6" fill="#fff"/><g stroke="#222" stroke-width="1.2"><path d="M20 3.5V6.5M20 27.5V30.5M6.5 17H9.5M30.500 17H33.5M13.2 5.3l1.3 2.3M25.500 26.4l1.300 2.300M8.300 10.200l2.300 1.300M29.400 22.500l2.300 1.300M8.300 23.800l2.300-1.300M29.400 11.500l2.300-1.300M13.200 28.700l1.300-2.300M25.500 7.600l1.300-2.300"/></g><path d="M21 4.500 L20 17 H28" fill="none" stroke="#111" stroke-width="1.8"/></svg></div>
<div class="a" style="left:1139px;top:794px;width:40px;height:33px;border:1px solid #8e8e8e;border-radius:4.500px"><svg width="40" height="33" viewBox="0 0 40 33"><path d="M10 2.500 H26 L32 8.500 V29 H10 Z" fill="#ececec" stroke="#fafafa" stroke-width="1"/><path d="M26 2.500 V8.500 H32 Z" fill="#c9c9c9"/><g stroke="#bdbdbd" stroke-width="0.9"><path d="M13 9H24M13 12H28M13 15H28M13 18H28M13 21H28M13 24H24M17 7V26M22 7V26"/></g><path d="M27 19.500 h4 v4 h4 v4 h-4 v4 h-4 v-4 h-4 v-4 h4 Z" fill="#9ccb3a" stroke="#d7eea0" stroke-width="0.6"/></svg></div>
<div class="a" style="left:1186px;top:794px;width:40px;height:33px;border:1px solid #8e8e8e;border-radius:4.500px"><svg width="40" height="33" viewBox="0 0 40 33"><defs><linearGradient id="gg" x1="0" y1="0" x2="1" y2="1"><stop offset="0" stop-color="#f4f4f4"/><stop offset="0.5" stop-color="#c4c8cc"/><stop offset="1" stop-color="#8e9498"/></linearGradient></defs><path d="M17.42 2.22 L22.58 2.22 L22.64 6.01 L25.90 7.37 L28.63 4.73 L32.27 8.37 L29.63 11.10 L30.99 14.36 L34.78 14.42 L34.78 19.58 L30.99 19.64 L29.63 22.90 L32.27 25.63 L28.63 29.27 L25.90 26.63 L22.64 27.99 L22.58 31.78 L17.42 31.78 L17.36 27.99 L14.10 26.63 L11.37 29.27 L7.73 25.63 L10.37 22.90 L9.01 19.64 L5.22 19.58 L5.22 14.42 L9.01 14.36 L10.37 11.10 L7.73 8.37 L11.37 4.73 L14.10 7.37 L17.36 6.01 Z" fill="url(#gg)"/><circle cx="20" cy="17" r="8" fill="#9a9ea2"/><circle cx="20" cy="17" r="5.800" fill="#000"/></svg></div>
<div class="a" style="left:1232px;top:794px;width:40px;height:33px;border:1px solid #8e8e8e;border-radius:4.500px"><svg width="40" height="33" viewBox="0 0 40 33"><defs><linearGradient id="xg" x1="0" y1="0" x2="0" y2="1"><stop offset="0" stop-color="#2a8fd0"/><stop offset="0.5" stop-color="#5ab4e6"/><stop offset="1" stop-color="#2f95d4"/></linearGradient></defs><path d="M13.600 6 L20 12.200 L26.400 6 L31.400 10.900 L25 17.100 L31.400 23.300 L26.400 28.200 L20 22 L13.600 28.200 L8.600 23.300 L15 17.100 L8.600 10.900 Z" fill="url(#xg)"/></svg></div>
</div>
<div class="a" style="left:7px;top:151px;width:1278px;height:690px;border:1px solid rgba(72,68,78,0.55);border-radius:8px;pointer-events:none"></div>
<div class="a" style="left:1291px;top:219px;width:515px;height:316px;border-radius:8px;box-shadow:0 9px 24px rgba(0,0,0,0.26),0 0 2px rgba(0,0,0,0.4)"></div>
<div class="win" style="clip-path:inset(219px 16px 407px 1291px round 8px)">
<div style="left:1291px;top:219px;width:515px;height:316px;background:#f0f0f0"></div>
<div style="left:1291px;top:219px;width:515px;height:30px;background:#f3f3f3"></div>
<div style="left:1291px;top:249px;width:515px;height:18px;background:#fff"></div>
<svg class="a" style="left:1298px;top:226px" width="17" height="14" viewBox="0 0 17 14"><path d="M2.2 12.500 A7.300 7.300 0 1 1 14.800 12.500" fill="none" stroke="#111" stroke-width="1.5"/><path d="M8.500 3.200V5M4.300 5.200l1.200 1.200M12.700 5.200l-1.200 1.200M2.800 9.300h1.700M12.500 9.300h1.700" stroke="#111" stroke-width="1.2"/><path d="M8.500 6.500V11" stroke="#111" stroke-width="1.500"/><circle cx="8.500" cy="11.300" r="1.700" fill="#111"/></svg>
<div class="a" style="left:1321px;top:226px;height:17px;line-height:17px;font-size:12px;color:#8e8e8e;white-space:nowrap;letter-spacing:-0.1px">Завершено - LinX v0.9.14 for Intel</div>
<svg class="a" style="left:1687px;top:228px" width="102" height="11" viewBox="0 0 102 11"><path d="M0 5.500H10" stroke="#7a7a7a" stroke-width="1"/><rect x="45.500" y="0.500" width="9" height="9" rx="1.2" fill="none" stroke="#dcdcdc" stroke-width="1"/><path d="M91 0.500L101 10.500M101 0.500L91 10.500" stroke="#6a6a6a" stroke-width="1"/></svg>
<div class="a" style="left:1298px;top:250.800px;height:17px;line-height:17px;font-size:12px;color:#6f6f6f;white-space:nowrap">Файл</div>
<div class="a" style="left:1341px;top:250.800px;height:17px;line-height:17px;font-size:12px;color:#6f6f6f;white-space:nowrap">Настройки</div>
<div class="a" style="left:1415px;top:250.800px;height:17px;line-height:17px;font-size:12px;color:#6f6f6f;white-space:nowrap">Графики</div>
<div class="a" style="left:1477px;top:250.800px;height:17px;line-height:17px;font-size:12px;color:#6f6f6f;white-space:nowrap">?</div>
<div class="a" style="left:1296px;top:276px;height:17px;line-height:17px;color:#000;white-space:nowrap;letter-spacing:-0.17px">Объём задачи:</div>
<div class="a" style="left:1377px;top:274px;width:58px;height:19px;background:#fff;border:1px solid #7a7a7a;border-radius:3px"><div style="left:2.5px;top:2px;height:17px;line-height:17px;color:#000;white-space:nowrap;letter-spacing:-0.1px">38373</div><svg class="a" style="left:44.5px;top:7px" width="10" height="6" viewBox="0 0 10 6"><path d="M0.600 0.700L5 5.100L9.400 0.700" fill="none" stroke="#555" stroke-width="1"/></svg></div>
<div class="a" style="left:1461.5px;top:276px;height:17px;line-height:17px;color:#000;white-space:nowrap;letter-spacing:-0.1px">Память (Мб):</div>
<div class="a" style="left:1533px;top:274px;width:53px;height:19px;background:#fff;border:1px solid #7a7a7a;border-radius:3px"><div style="left:2.5px;top:2px;height:17px;line-height:17px;color:#000;white-space:nowrap;letter-spacing:-0.1px">11264</div><svg class="a" style="left:39.5px;top:7px" width="10" height="6" viewBox="0 0 10 6"><path d="M0.600 0.700L5 5.100L9.400 0.700" fill="none" stroke="#555" stroke-width="1"/></svg></div>
<div class="a" style="left:1594px;top:275px;height:17px;line-height:17px;color:#000;white-space:nowrap;letter-spacing:-0.2px">Вся</div>
<div class="a" style="left:1644.5px;top:276px;height:17px;line-height:17px;color:#000;white-space:nowrap;">Пройти:</div>
<div class="a" style="left:1691px;top:274px;width:48px;height:19px;background:#fff;border:1px solid #7a7a7a;border-radius:3px"><div style="left:2.5px;top:2px;height:17px;line-height:17px;color:#000;white-space:nowrap;letter-spacing:-0.1px">10</div><svg class="a" style="left:34.5px;top:7px" width="10" height="6" viewBox="0 0 10 6"><path d="M0.600 0.700L5 5.100L9.400 0.700" fill="none" stroke="#555" stroke-width="1"/></svg></div>
<div class="a" style="left:1746px;top:274px;width:53px;height:19px;background:#fff;border:1px solid #d6d6d6;border-radius:3px"><div style="left:2px;top:2px;height:17px;line-height:17px;color:#000;white-space:nowrap;letter-spacing:-0.1px">раз(а)</div><svg class="a" style="left:39.5px;top:7px" width="10" height="6" viewBox="0 0 10 6"><path d="M0.600 0.700L5 5.100L9.400 0.700" fill="none" stroke="#555" stroke-width="1"/></svg></div>
<div class="a" style="left:1297px;top:300px;width:71px;height:21px;background:#fdfdfd;border:1px solid #d0d0d0;border-radius:4px;line-height:23px;text-align:center;color:#000;letter-spacing:-0.1px">Пуск</div>
<div class="a" style="left:1376px;top:300px;width:343px;height:21px;background:#dcdcdc;border:1px solid #a6a6a6;border-radius:3px"></div>
<div class="a" style="left:1378px;top:302px;width:339px;height:17px;background:#75a1d0;border:1px solid #21418a;line-height:19px;text-align:center;color:#000;letter-spacing:-0.16px">Завершено без ошибок за 12 м 32 с</div>
<div class="a" style="left:1728px;top:300px;width:70px;height:21px;background:#f6f6f6;border:1px solid #e6e6e6;border-radius:4px;line-height:23px;text-align:center;color:#8a8a8a;letter-spacing:-0.1px">Стоп</div>
<div style="left:1292px;top:330px;width:497px;height:185px;background:#fff"></div>
<div class="win" style="clip-path:inset(330px 0 427px 0)">
<div class="lt" style="left:1292px;top:333px;width:24px;height:17px;text-align:left;padding-left:5px;">№</div>
<div class="lt" style="left:1320px;top:333px;width:50px;height:17px;">Size</div>
<div class="lt" style="left:1369.7px;top:333px;width:50px;height:17px;">LDA</div>
<div class="lt" style="left:1420px;top:333px;width:40px;height:17px;">Align</div>
<div class="lt" style="left:1459.6px;top:333px;width:65px;height:17px;">Time</div>
<div class="lt" style="left:1525.4px;top:333px;width:70px;height:17px;">GFlops</div>
<div class="lt" style="left:1594.4px;top:333px;width:95px;height:17px;">Residual</div>
<div class="lt" style="left:1690.4px;top:333px;width:98px;height:17px;">Residual (norm)</div>
<div style="left:1292px;top:354px;width:497px;height:17px;background:#d9d9d9"></div>
<div class="lt" style="left:1292px;top:354px;width:24px;height:17px;text-align:left;padding-left:5px;">1</div>
<div class="lt" style="left:1320px;top:354px;width:50px;height:17px;">38373</div>
<div class="lt" style="left:1369.7px;top:354px;width:50px;height:17px;">38376</div>
<div class="lt" style="left:1420px;top:354px;width:40px;height:17px;">4</div>
<div class="lt" style="left:1459.6px;top:354px;width:65px;height:17px;">69.461</div>
<div class="lt" style="left:1525.4px;top:354px;width:70px;height:17px;">542.3487</div>
<div class="lt" style="left:1594.4px;top:354px;width:95px;height:17px;">1.449696e-09</div>
<div class="lt" style="left:1690.4px;top:354px;width:98px;height:17px;">3.426060e-02</div>
<div style="left:1292px;top:370px;width:497px;height:1px;background:#f0f0f0"></div>
<div class="lt" style="left:1292px;top:371px;width:24px;height:17px;text-align:left;padding-left:5px;">2</div>
<div class="lt" style="left:1320px;top:371px;width:50px;height:17px;">38373</div>
<div class="lt" style="left:1369.7px;top:371px;width:50px;height:17px;">38376</div>
<div class="lt" style="left:1420px;top:371px;width:40px;height:17px;">4</div>
<div class="lt" style="left:1459.6px;top:371px;width:65px;height:17px;">70.811</div>
<div class="lt" style="left:1525.4px;top:371px;width:70px;height:17px;">532.0099</div>
<div class="lt" style="left:1594.4px;top:371px;width:95px;height:17px;">1.449696e-09</div>
<div class="lt" style="left:1690.4px;top:371px;width:98px;height:17px;">3.426060e-02</div>
<div style="left:1292px;top:387px;width:497px;height:1px;background:#f0f0f0"></div>
<div class="lt" style="left:1292px;top:388px;width:24px;height:17px;text-align:left;padding-left:5px;">3</div>
<div class="lt" style="left:1320px;top:388px;width:50px;height:17px;">38373</div>
<div class="lt" style="left:1369.7px;top:388px;width:50px;height:17px;">38376</div>
<div class="lt" style="left:1420px;top:388px;width:40px;height:17px;">4</div>
<div class="lt" style="left:1459.6px;top:388px;width:65px;height:17px;">70.585</div>
<div class="lt" style="left:1525.4px;top:388px;width:70px;height:17px;">533.7157</div>
<div class="lt" style="left:1594.4px;top:388px;width:95px;height:17px;">1.449696e-09</div>
<div class="lt" style="left:1690.4px;top:388px;width:98px;height:17px;">3.426060e-02</div>
<div style="left:1292px;top:404px;width:497px;height:1px;background:#f0f0f0"></div>
<div class="lt" style="left:1292px;top:405px;width:24px;height:17px;text-align:left;padding-left:5px;">4</div>
<div class="lt" style="left:1320px;top:405px;width:50px;height:17px;">38373</div>
<div class="lt" style="left:1369.7px;top:405px;width:50px;height:17px;">38376</div>
<div class="lt" style="left:1420px;top:405px;width:40px;height:17px;">4</div>
<div class="lt" style="left:1459.6px;top:405px;width:65px;height:17px;">70.860</div>
<div class="lt" style="left:1525.4px;top:405px;width:70px;height:17px;">531.6450</div>
<div class="lt" style="left:1594.4px;top:405px;width:95px;height:17px;">1.449696e-09</div>
<div class="lt" style="left:1690.4px;top:405px;width:98px;height:17px;">3.426060e-02</div>
<div style="left:1292px;top:421px;width:497px;height:1px;background:#f0f0f0"></div>
<div class="lt" style="left:1292px;top:422px;width:24px;height:17px;text-align:left;padding-left:5px;">5</div>
<div class="lt" style="left:1320px;top:422px;width:50px;height:17px;">38373</div>
<div class="lt" style="left:1369.7px;top:422px;width:50px;height:17px;">38376</div>
<div class="lt" style="left:1420px;top:422px;width:40px;height:17px;">4</div>
<div class="lt" style="left:1459.6px;top:422px;width:65px;height:17px;">70.696</div>
<div class="lt" style="left:1525.4px;top:422px;width:70px;height:17px;">532.8775</div>
<div class="lt" style="left:1594.4px;top:422px;width:95px;height:17px;">1.449696e-09</div>
<div class="lt" style="left:1690.4px;top:422px;width:98px;height:17px;">3.426060e-02</div>
<div style="left:1292px;top:438px;width:497px;height:1px;background:#f0f0f0"></div>
<div class="lt" style="left:1292px;top:439px;width:24px;height:17px;text-align:left;padding-left:5px;">6</div>
<div class="lt" style="left:1320px;top:439px;width:50px;height:17px;">38373</div>
<div class="lt" style="left:1369.7px;top:439px;width:50px;height:17px;">38376</div>
<div class="lt" style="left:1420px;top:439px;width:40px;height:17px;">4</div>
<div class="lt" style="left:1459.6px;top:439px;width:65px;height:17px;">70.677</div>
<div class="lt" style="left:1525.4px;top:439px;width:70px;height:17px;">533.0158</div>
<div class="lt" style="left:1594.4px;top:439px;width:95px;height:17px;">1.449696e-09</div>
<div class="lt" style="left:1690.4px;top:439px;width:98px;height:17px;">3.426060e-02</div>
<div style="left:1292px;top:455px;width:497px;height:1px;background:#f0f0f0"></div>
<div class="lt" style="left:1292px;top:456px;width:24px;height:17px;text-align:left;padding-left:5px;">7</div>
<div class="lt" style="left:1320px;top:456px;width:50px;height:17px;">38373</div>
<div class="lt" style="left:1369.7px;top:456px;width:50px;height:17px;">38376</div>
<div class="lt" style="left:1420px;top:456px;width:40px;height:17px;">4</div>
<div class="lt" style="left:1459.6px;top:456px;width:65px;height:17px;">70.670</div>
<div class="lt" style="left:1525.4px;top:456px;width:70px;height:17px;">533.0686</div>
<div class="lt" style="left:1594.4px;top:456px;width:95px;height:17px;">1.449696e-09</div>
<div class="lt" style="left:1690.4px;top:456px;width:98px;height:17px;">3.426060e-02</div>
<div style="left:1292px;top:472px;width:497px;height:1px;background:#f0f0f0"></div>
<div class="lt" style="left:1292px;top:473px;width:24px;height:17px;text-align:left;padding-left:5px;">8</div>
<div class="lt" style="left:1320px;top:473px;width:50px;height:17px;">38373</div>
<div class="lt" style="left:1369.7px;top:473px;width:50px;height:17px;">38376</div>
<div class="lt" style="left:1420px;top:473px;width:40px;height:17px;">4</div>
<div class="lt" style="left:1459.6px;top:473px;width:65px;height:17px;">70.531</div>
<div class="lt" style="left:1525.4px;top:473px;width:70px;height:17px;">534.1230</div>
<div class="lt" style="left:1594.4px;top:473px;width:95px;height:17px;">1.449696e-09</div>
<div class="lt" style="left:1690.4px;top:473px;width:98px;height:17px;">3.426060e-02</div>
<div style="left:1292px;top:489px;width:497px;height:1px;background:#f0f0f0"></div>
<div class="lt" style="left:1292px;top:490px;width:24px;height:17px;text-align:left;padding-left:5px;">9</div>
<div class="lt" style="left:1320px;top:490px;width:50px;height:17px;">38373</div>
<div class="lt" style="left:1369.7px;top:490px;width:50px;height:17px;">38376</div>
<div class="lt" style="left:1420px;top:490px;width:40px;height:17px;">4</div>
<div class="lt" style="left:1459.6px;top:490px;width:65px;height:17px;">70.424</div>
<div class="lt" style="left:1525.4px;top:490px;width:70px;height:17px;">534.9323</div>
<div class="lt" style="left:1594.4px;top:490px;width:95px;height:17px;">1.449696e-09</div>
<div class="lt" style="left:1690.4px;top:490px;width:98px;height:17px;">3.426060e-02</div>
<div style="left:1292px;top:506px;width:497px;height:1px;background:#f0f0f0"></div>
<div class="lt" style="left:1292px;top:507px;width:24px;height:17px;text-align:left;padding-left:5px;">10</div>
<div class="lt" style="left:1320px;top:507px;width:50px;height:17px;">38373</div>
<div class="lt" style="left:1369.7px;top:507px;width:50px;height:17px;">38376</div>
<div class="lt" style="left:1420px;top:507px;width:40px;height:17px;">4</div>
<div class="lt" style="left:1459.6px;top:507px;width:65px;height:17px;">70.904</div>
<div class="lt" style="left:1525.4px;top:507px;width:70px;height:17px;">528.1433</div>
<div class="lt" style="left:1594.4px;top:507px;width:95px;height:17px;">1.449696e-09</div>
<div class="lt" style="left:1690.4px;top:507px;width:98px;height:17px;">3.426060e-02</div>
<div style="left:1292px;top:523px;width:497px;height:1px;background:#f0f0f0"></div>
<div style="left:1320px;top:330px;width:1px;height:185px;background:#ededed"></div>
<div style="left:1370px;top:330px;width:1px;height:185px;background:#ededed"></div>
<div style="left:1420px;top:330px;width:1px;height:185px;background:#ededed"></div>
<div style="left:1460px;top:330px;width:1px;height:185px;background:#ededed"></div>
<div style="left:1525px;top:330px;width:1px;height:185px;background:#ededed"></div>
<div style="left:1595px;top:330px;width:1px;height:185px;background:#ededed"></div>
<div style="left:1690px;top:330px;width:1px;height:185px;background:#ededed"></div>
</div>
<div style="left:1789px;top:330px;width:16px;height:185px;background:#f0f0f0"></div>
<div style="left:1797px;top:347px;width:2px;height:135px;background:#8b8b8b;border-radius:1px"></div>
<div style="left:1291px;top:515px;width:515px;height:20px;background:#f0f0f0"></div>
<div style="left:1345px;top:517px;width:1px;height:16px;background:#d7d7d7"></div>
<div style="left:1390px;top:517px;width:1px;height:16px;background:#d7d7d7"></div>
<div style="left:1450px;top:517px;width:1px;height:16px;background:#d7d7d7"></div>
<div style="left:1560px;top:517px;width:1px;height:16px;background:#d7d7d7"></div>
<div style="left:1770px;top:517px;width:1px;height:16px;background:#d7d7d7"></div>
<div class="lt" style="left:1291.5px;top:517px;width:53px;height:17px">10/10</div>
<div class="lt" style="left:1346.3px;top:517px;width:44px;height:17px">64-bit</div>
<div class="lt" style="left:1392.5px;top:517px;width:59px;height:17px">16 treads</div>
<div class="lt" style="left:1453px;top:517px;width:109px;height:17px">542.3487 GF '</div>
<div class="lt" style="left:1563.5px;top:517px;width:209px;height:17px">12th Gen Intel® Core™ i5-12600K</div>
<div class="lt" style="left:1772px;top:517px;width:34px;height:17px">Лог-&gt;</div>
</div>
</div></body></html>
